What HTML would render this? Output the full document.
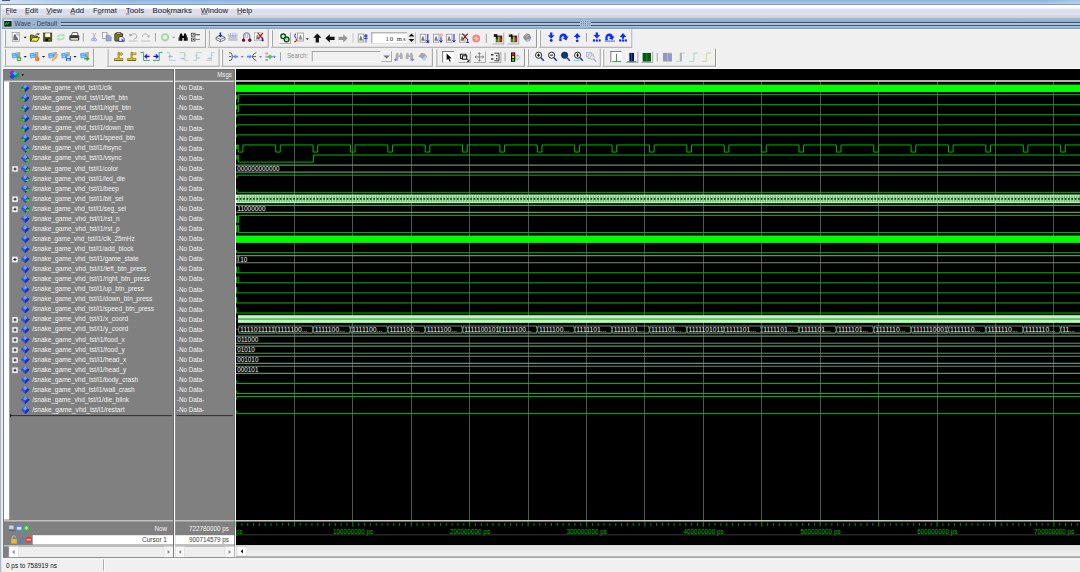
<!DOCTYPE html>
<html lang="en"><head><meta charset="utf-8"><title>Wave - Default</title>
<style>
html,body{margin:0;padding:0;background:#f0f0f0;overflow:hidden}
#app{position:relative;width:1080px;height:572px;overflow:hidden;background:#f0f0f0;font-family:"Liberation Sans",sans-serif}
#app>div{position:absolute}
svg{position:absolute;left:0;top:0;overflow:visible}
svg text{font-family:"Liberation Sans",sans-serif;white-space:pre}
#frame{left:0;top:0;width:1080px;height:5px;background:linear-gradient(90deg,rgba(214,230,246,.95) 0,rgba(214,230,246,.6) 40px,rgba(214,230,246,0) 130px,rgba(214,230,246,0) 1040px,rgba(214,230,246,.35) 1080px),linear-gradient(#8db1d9 0,#9bc0e6 45%,#a9cdf0 80%,#a4c4e4 100%)}
#framenub{left:2px;top:0;width:8px;height:1px;background:#3c3c44;opacity:.85}
#frameline{left:0;top:3.6px;width:1080px;height:1.3px;background:linear-gradient(#94a6bc,#7f8c9c)}
#frameleft{left:0;top:5px;width:2px;height:567px;background:linear-gradient(90deg,#9fadbf,#b4c0d0 45%,#dfe4ec 55%,#e6eaf0)}
#wtop{left:236px;top:68px;width:844px;height:1px;background:#fcfcfc}
#menubar{left:1px;top:5px;width:1079px;height:11px;background:linear-gradient(#ffffff 0,#fcfcfe 28%,#eceef8 35%,#dadeee 42%,#d9ddee 62%,#e0e4f3 100%)}
#menugap{left:1px;top:15.4px;width:1079px;height:2.6px;background:linear-gradient(#dcdde6 0,#d4d4d6 35%,#d8d8da 100%)}
#wtitle{left:2px;top:18px;width:1078px;height:11px;background:linear-gradient(#9ab5d3 0,#99b4d1 85%,#7f9bbb 100%)}
#tb1{left:2px;top:29px;width:1078px;height:19px;background:#f0f0f0}
#tb2{left:2px;top:48px;width:1078px;height:20px;background:#f0f0f0}
#names{left:3px;top:68px;width:171px;height:490px;background:#808080}
#values{left:174px;top:68px;width:62px;height:490px;background:#808080}
#waves{left:236px;top:69px;width:844px;height:477px;background:#000}
#wscroll{left:236px;top:545px;width:844px;height:13px;background:#f0f0f0}
#status{left:2px;top:558px;width:1078px;height:14px;background:#f0f0f0}
</style></head><body>
<div id="app">
<div id="frame"></div><div id="framenub"></div><div id="frameline"></div>

<div id="menubar"><svg width="1079" height="11" viewBox="1 5 1079 11">
<text x="5.7" y="12.9" font-size="7.9" fill="#1c1c1c" text-anchor="start" textLength="11.0" lengthAdjust="spacingAndGlyphs" >File</text>
<text x="24.9" y="12.9" font-size="7.9" fill="#1c1c1c" text-anchor="start" textLength="13.2" lengthAdjust="spacingAndGlyphs" >Edit</text>
<text x="46.3" y="12.9" font-size="7.9" fill="#1c1c1c" text-anchor="start" textLength="15.7" lengthAdjust="spacingAndGlyphs" >View</text>
<text x="70.2" y="12.9" font-size="7.9" fill="#1c1c1c" text-anchor="start" textLength="13.9" lengthAdjust="spacingAndGlyphs" >Add</text>
<text x="93.0" y="12.9" font-size="7.9" fill="#1c1c1c" text-anchor="start" textLength="23.9" lengthAdjust="spacingAndGlyphs" >Format</text>
<text x="125.7" y="12.9" font-size="7.9" fill="#1c1c1c" text-anchor="start" textLength="18.6" lengthAdjust="spacingAndGlyphs" >Tools</text>
<text x="152.6" y="12.9" font-size="7.9" fill="#1c1c1c" text-anchor="start" textLength="39.3" lengthAdjust="spacingAndGlyphs" >Bookmarks</text>
<text x="200.7" y="12.9" font-size="7.9" fill="#1c1c1c" text-anchor="start" textLength="27.4" lengthAdjust="spacingAndGlyphs" >Window</text>
<text x="236.9" y="12.9" font-size="7.9" fill="#1c1c1c" text-anchor="start" textLength="15.3" lengthAdjust="spacingAndGlyphs" >Help</text>
<rect x="5.9" y="13.7" width="3.4" height="0.6" fill="#3a3a3a"/>
<rect x="25.1" y="13.7" width="3.8" height="0.6" fill="#3a3a3a"/>
<rect x="46.6" y="13.7" width="4.4" height="0.6" fill="#3a3a3a"/>
<rect x="70.4" y="13.7" width="4.6" height="0.6" fill="#3a3a3a"/>
<rect x="97.6" y="13.7" width="4.0" height="0.6" fill="#3a3a3a"/>
<rect x="125.9" y="13.7" width="3.8" height="0.6" fill="#3a3a3a"/>
<rect x="167.6" y="13.7" width="3.4" height="0.6" fill="#3a3a3a"/>
<rect x="201" y="13.7" width="6.6" height="0.6" fill="#3a3a3a"/>
<rect x="237.1" y="13.7" width="4.6" height="0.6" fill="#3a3a3a"/>
</svg></div><div id="menugap"></div>
<div id="wtitle"><svg width="1078" height="11" viewBox="2 18 1078 11">
<rect x="3.8" y="19.3" width="8.4" height="8" fill="#d8d8d8"/><rect x="4.2" y="21" width="7.4" height="5.6" fill="#062a10"/>
<path d="M5 25 L6.5 22.5 L7.5 24.5 L9 22 " stroke="#20d060" stroke-width="0.9" fill="none"/>
<text x="14.5" y="26.4" font-size="7.6" fill="#2e4260" text-anchor="start" textLength="42.8" lengthAdjust="spacingAndGlyphs" >Wave - Default</text>
<rect x="61" y="21.9" width="1019" height="1.1" fill="#41566e"/><rect x="61" y="24.9" width="1019" height="1.1" fill="#41566e"/>
<rect x="61" y="23" width="1019" height="1.9" fill="#a8c6de"/><rect x="61" y="26" width="1019" height="1" fill="#a4c0da"/>
<rect x="580" y="20.3" width="11" height="6.2" fill="#a9c2de"/>
<rect x="581.0" y="21.0" width="0.9" height="0.9" fill="#5f7896"/>
<rect x="583.1" y="21.0" width="0.9" height="0.9" fill="#5f7896"/>
<rect x="585.2" y="21.0" width="0.9" height="0.9" fill="#5f7896"/>
<rect x="587.3" y="21.0" width="0.9" height="0.9" fill="#5f7896"/>
<rect x="589.4" y="21.0" width="0.9" height="0.9" fill="#5f7896"/>
<rect x="581.0" y="22.9" width="0.9" height="0.9" fill="#5f7896"/>
<rect x="583.1" y="22.9" width="0.9" height="0.9" fill="#5f7896"/>
<rect x="585.2" y="22.9" width="0.9" height="0.9" fill="#5f7896"/>
<rect x="587.3" y="22.9" width="0.9" height="0.9" fill="#5f7896"/>
<rect x="589.4" y="22.9" width="0.9" height="0.9" fill="#5f7896"/>
<rect x="581.0" y="24.8" width="0.9" height="0.9" fill="#5f7896"/>
<rect x="583.1" y="24.8" width="0.9" height="0.9" fill="#5f7896"/>
<rect x="585.2" y="24.8" width="0.9" height="0.9" fill="#5f7896"/>
<rect x="587.3" y="24.8" width="0.9" height="0.9" fill="#5f7896"/>
<rect x="589.4" y="24.8" width="0.9" height="0.9" fill="#5f7896"/>
</svg></div>
<div id="tb1"><svg width="1078" height="19" viewBox="2 29 1078 19"><rect x="4.10" y="30.20" width="0.90" height="16.10" fill="#ffffff" /><rect x="5.00" y="30.20" width="0.90" height="16.30" fill="#9c9c9c" /><rect x="4.10" y="46.80" width="202.10" height="1.00" fill="#969696" /><rect x="205.20" y="29.40" width="1.00" height="18.30" fill="#969696" /><rect x="206.20" y="29.40" width="0.70" height="18.90" fill="#fbfbfb" /><rect x="4.10" y="47.80" width="202.70" height="0.70" fill="#fbfbfb" /><rect x="207.90" y="30.20" width="0.90" height="16.10" fill="#ffffff" /><rect x="208.80" y="30.20" width="0.90" height="16.30" fill="#9c9c9c" /><rect x="207.90" y="46.80" width="60.90" height="1.00" fill="#969696" /><rect x="267.80" y="29.40" width="1.00" height="18.30" fill="#969696" /><rect x="268.80" y="29.40" width="0.70" height="18.90" fill="#fbfbfb" /><rect x="207.90" y="47.80" width="61.50" height="0.70" fill="#fbfbfb" /><rect x="271.10" y="30.20" width="0.90" height="16.10" fill="#ffffff" /><rect x="272.00" y="30.20" width="0.90" height="16.30" fill="#9c9c9c" /><rect x="271.10" y="46.80" width="265.90" height="1.00" fill="#969696" /><rect x="536.00" y="29.40" width="1.00" height="18.30" fill="#969696" /><rect x="537.00" y="29.40" width="0.70" height="18.90" fill="#fbfbfb" /><rect x="271.10" y="47.80" width="266.50" height="0.70" fill="#fbfbfb" /><rect x="539.10" y="30.20" width="0.90" height="16.10" fill="#ffffff" /><rect x="540.00" y="30.20" width="0.90" height="16.30" fill="#9c9c9c" /><rect x="539.10" y="46.80" width="93.40" height="1.00" fill="#969696" /><rect x="631.50" y="29.40" width="1.00" height="18.30" fill="#969696" /><rect x="632.50" y="29.40" width="0.70" height="18.90" fill="#fbfbfb" /><rect x="539.10" y="47.80" width="94.00" height="0.70" fill="#fbfbfb" /><rect x="12.20" y="32.60" width="7.40" height="8.80" fill="#fafafa" stroke="#9a9a9a" stroke-width="0.7"/><path d="M13.2 40.2 L13.6 36 L14.6 34.2 L16 34.4 L16.4 36.8 L17.4 37.4 L18.4 40.2Z" fill="#6a6a6a" /><path d="M17 32.4 L19.8 35.2 L17 35.2Z" fill="#d8d8d8" stroke="#9a9a9a" stroke-width="0.5" /><path d="M23.50 36.80H26.70L25.10 38.60Z" fill="#222" /><path d="M30.4 41.2 V35 H33 L34 36 H37.4 V37.6" fill="#8a8a10" stroke="#3a3a00" stroke-width="0.8" /><path d="M30.6 41.2 L32.6 37.4 H39.4 L37.4 41.2Z" fill="#f0ea48" stroke="#3a3a00" stroke-width="0.8" /><path d="M35.6 34.6 Q37.4 32.8 38.8 34.4 M38.9 34.5 l-1.5 0.1 M38.9 34.5 l0.1 -1.5" fill="none" stroke="#222" stroke-width="0.7" /><rect x="43.60" y="33.00" width="8.20" height="8.20" fill="#5e5e08" stroke="#2a2a00" stroke-width="0.6"/><rect x="45.20" y="33.30" width="5.00" height="3.60" fill="#fbfbfb" /><rect x="45.40" y="38.60" width="4.40" height="2.60" fill="#050505" /><rect x="48.60" y="39.00" width="0.90" height="1.80" fill="#d0d0d0" /><path d="M56.6 36.6 Q58.4 33.4 62.4 34.4 L62.8 33.2 L65.4 35.6 L62 37 L62.2 35.8 Q59.4 35 58.2 37.4Z" fill="#b2dcb6" /><path d="M65.2 37.8 Q63.4 41 59.4 40 L59 41.2 L56.4 38.8 L59.8 37.4 L59.6 38.6 Q62.4 39.4 63.6 37Z" fill="#b2dcb6" /><path d="M71.4 35.6 L72.4 32.6 H77.6 L78 35.6Z" fill="#f4f4f4" stroke="#333" stroke-width="0.7" /><path d="M69.4 36 Q69.4 35.2 70.4 35.2 H78 Q79.2 35.2 79.2 36.2 V39.4 Q79.2 40.6 78 40.6 H70.6 Q69.4 40.6 69.4 39.6Z" fill="#3a3a3a" /><rect x="70.60" y="38.20" width="7.40" height="1.50" fill="#f4f4f4" /><rect x="74.60" y="38.40" width="2.20" height="1.00" fill="#e8d820" /><rect x="82.85" y="33.00" width="0.90" height="8.60" fill="#9a9a9a" /><path d="M92.6 32.8 L94.8 37.8 M95.8 32.8 L93.4 37.8" fill="none" stroke="#a4a4b0" stroke-width="0.8" /><circle cx="92.60" cy="39.60" r="1.15" fill="none" stroke="#7878ff" stroke-width="0.75"/><circle cx="95.40" cy="39.80" r="1.15" fill="none" stroke="#7878ff" stroke-width="0.75"/><path d="M93.4 37.6 L93 38.6 M94.8 37.6 L95.2 38.8" fill="none" stroke="#7878ff" stroke-width="0.8" /><rect x="102.40" y="32.60" width="4.60" height="6.00" fill="#f6f6f6" stroke="#909090" stroke-width="0.7"/><path d="M106 35 H109.4 L111.2 36.8 V41 H106Z" fill="#9aa0d8" stroke="#8a8ab8" stroke-width="0.6" /><path d="M109.4 35 V36.8 H111.2" fill="#e8e8f4" stroke="#8a8ab8" stroke-width="0.4" /><rect x="114.80" y="33.40" width="7.80" height="7.60" fill="#7a7a10" stroke="#2c2c00" stroke-width="0.8" rx="0.6"/><rect x="116.80" y="32.40" width="3.80" height="1.80" fill="#c8c8c8" stroke="#2c2c00" stroke-width="0.6"/><path d="M118.8 36.6 H122.2 L124.2 38.6 V41.4 H118.8Z" fill="#f4f4fa" stroke="#20209a" stroke-width="0.8" /><path d="M121.6 38.4 L124 40.8 H121.6Z" fill="#20209a" /><path d="M130.2 35.2 Q135 32 136.8 35.6 Q137.4 38.2 133.6 39.4" fill="none" stroke="#a6a6a6" stroke-width="0.9" /><path d="M129.2 33.6 L129.6 36.6 L132.4 35.8Z" fill="#a6a6a6" /><rect x="128.60" y="40.60" width="9.20" height="0.80" fill="#b4b4b4" /><path d="M148.8 36.8 Q147.6 32.8 144 34.2 Q142.4 35.2 142.4 37" fill="none" stroke="#b0b0b0" stroke-width="0.9" /><path d="M149.8 34.8 L149.2 37.8 L146.6 36.8Z" fill="#b0b0b0" /><rect x="140.80" y="40.60" width="9.20" height="0.80" fill="#b4b4b4" /><rect x="154.95" y="33.00" width="0.90" height="8.60" fill="#9a9a9a" /><circle cx="165.10" cy="37.30" r="3.30" fill="#d4ecd4" stroke="#a6d4aa" stroke-width="1.7"/><circle cx="165.10" cy="37.30" r="1.10" fill="#f2faf2"/><path d="M172.10 36.80H175.30L173.70 38.60Z" fill="#9a9a9a" /><path d="M179.4 40.8 V36 L180.4 33.4 H182 L182.6 36 H183.6 L184.2 33.4 H185.8 L186.8 36 V40.8 H183.8 V38 H182.4 V40.8Z" fill="#0a0a0a" /><rect x="178.60" y="37.40" width="0.90" height="3.40" fill="#0a0a0a" /><rect x="186.80" y="37.40" width="0.90" height="3.40" fill="#0a0a0a" /><rect x="191.60" y="33.20" width="3.40" height="3.00" fill="#f0f0f0" stroke="#333" stroke-width="0.7"/><rect x="191.60" y="38.00" width="3.40" height="3.00" fill="#f0f0f0" stroke="#333" stroke-width="0.7"/><rect x="195.40" y="34.30" width="4.60" height="0.90" fill="#333" /><rect x="195.40" y="39.10" width="4.60" height="0.90" fill="#777" /><rect x="192.60" y="34.30" width="1.60" height="0.90" fill="#333" /><rect x="192.60" y="39.10" width="1.60" height="0.90" fill="#333" /><path d="M216 37.4 L220.4 35.4 L225 37.4 V39.6 L220.4 41.8 L216 39.6Z" fill="#f2f2f2" stroke="#444" stroke-width="0.7" /><path d="M216 37.4 L220.4 39.4 L225 37.4 M220.4 39.4 V41.8" fill="none" stroke="#444" stroke-width="0.6" /><path d="M219.6 32.4 H221.2 V35 H222.6 L220.4 37.4 L218.2 35 H219.6Z" fill="#1030c8" /><rect x="228.20" y="36.40" width="9.20" height="4.60" fill="#c6c6c6" /><rect x="228.20" y="33.60" width="0.80" height="3.00" fill="#b8b8c8" /><rect x="236.60" y="33.60" width="0.80" height="3.00" fill="#b8b8c8" /><path d="M230.4 32.8 V36.4 M229.4 35.2 L230.4 36.6 L231.4 35.2" fill="none" stroke="#8a8ae8" stroke-width="0.7" /><path d="M232.8 32.8 V36.4 M231.8 35.2 L232.8 36.6 L233.8 35.2" fill="none" stroke="#8a8ae8" stroke-width="0.7" /><path d="M235.2 32.8 V36.4 M234.2 35.2 L235.2 36.6 L236.2 35.2" fill="none" stroke="#8a8ae8" stroke-width="0.7" /><path d="M243.6 39.6 V36.2 Q243.8 32.8 246.6 32.8 Q249.6 32.8 249.8 36.2 V39.6" fill="none" stroke="#8c8c98" stroke-width="1.3" /><path d="M245.6 33.6 L244.8 38 M248 33.4 L247.4 38" fill="none" stroke="#b4b4d0" stroke-width="1.2" /><circle cx="243.60" cy="40.20" r="1.40" fill="#a00024" stroke="#500010" stroke-width="0.5"/><circle cx="249.80" cy="40.20" r="1.40" fill="#a00024" stroke="#500010" stroke-width="0.5"/><rect x="254.60" y="32.80" width="6.40" height="8.00" fill="#f4f4f4" stroke="#9a9a9a" stroke-width="0.6"/><path d="M255.8 39.6 L256.8 35 L258.2 35 L258.8 37.6 L259.8 39.6Z" fill="#8a8a8a" /><path d="M257.8 32.8 L263.2 39.4 M263 32.8 L258.2 38.8" fill="none" stroke="#b01818" stroke-width="1.1" /><path d="M262.6 37.4 V41.4 M261.2 40.2 H264" fill="none" stroke="#1818c0" stroke-width="0.9" /><rect x="279.00" y="32.00" width="11.40" height="11.60" fill="#f0f0f0" /><rect x="279.00" y="43.00" width="11.80" height="0.80" fill="#a0a0a0" /><rect x="290.20" y="32.00" width="0.80" height="11.80" fill="#a0a0a0" /><rect x="279.00" y="32.00" width="11.40" height="0.60" fill="#fdfdfd" /><rect x="279.00" y="32.00" width="0.60" height="11.40" fill="#fdfdfd" /><circle cx="283.20" cy="36.20" r="2.30" fill="none" stroke="#0d5a20" stroke-width="1.5"/><circle cx="286.60" cy="39.40" r="2.30" fill="none" stroke="#0d5a20" stroke-width="1.5"/><circle cx="286.60" cy="39.40" r="0.90" fill="#9ccca0"/><rect x="297.60" y="33.00" width="5.80" height="8.00" fill="#f6f6f6" stroke="#8a8a8a" stroke-width="0.7"/><path d="M298.8 39.6 L299.8 35.2 L301 35.2 L301.6 37.6 L302.6 39.6Z" fill="#8a8a8a" /><path d="M296.2 38.2 Q293.6 36.2 295.8 33.6" fill="none" stroke="#2a3cff" stroke-width="1.1" /><path d="M296.4 38.8 Q296.6 41.8 294.2 41.8" fill="none" stroke="#d01818" stroke-width="1.1" /><path d="M305.70 38.20H308.90L307.30 40.00Z" fill="#222" /><path d="M317.3 33.6 L321.4 37.8 H318.9 V42.6 H315.7 V37.8 H313.2Z" fill="#111" /><path d="M325.4 38.3 L329.8 34.2 V36.7 H334.6 V39.9 H329.8 V42.4Z" fill="#111" /><path d="M347.7 38.3 L343.3 34.2 V36.7 H338.5 V39.9 H343.3 V42.4Z" fill="#969696" /><rect x="352.55" y="33.40" width="0.90" height="9.20" fill="#c0c0c0" /><rect x="358.20" y="34.00" width="5.60" height="8.00" fill="#f6f6f6" stroke="#8a8a8a" stroke-width="0.7"/><path d="M359.2 40.6 L360.2 36.2 L361.4 36.2 L362 38.6 L363 40.6Z" fill="#7a7a7a" /><rect x="365.00" y="34.00" width="1.80" height="8.60" fill="#9a9ad8" /><rect x="364.20" y="34.80" width="3.40" height="0.80" fill="#1a1ac0" /><rect x="364.20" y="36.40" width="3.40" height="0.80" fill="#1a1ac0" /><rect x="364.20" y="38.00" width="3.40" height="0.80" fill="#1a1ac0" /><rect x="371.60" y="32.60" width="35.20" height="10.60" fill="#ffffff" /><rect x="371.40" y="32.40" width="35.60" height="0.90" fill="#8e8e8e" /><rect x="371.40" y="32.40" width="0.90" height="10.80" fill="#8e8e8e" /><rect x="371.60" y="43.00" width="44.00" height="0.70" fill="#dcdcdc" /><text x="385.4" y="41.1" font-size="6.9" fill="#2c2c2c" textLength="20.4" lengthAdjust="spacing" style="font-family:'Liberation Serif',serif">10 ms</text><rect x="407.40" y="32.60" width="8.00" height="10.40" fill="#ececec" /><path d="M411.5 33.6 L414.4 36.6 H408.6Z" fill="#111" /><path d="M411.5 42.0 L414.4 39.0 H408.6Z" fill="#111" /><rect x="415.20" y="32.60" width="0.70" height="10.60" fill="#a8a8a8" /><rect x="420.20" y="34.20" width="5.60" height="8.00" fill="#f6f6f6" stroke="#8a8a8a" stroke-width="0.7"/><path d="M421.2 40.8 L422.2 36.4 L423.4 36.4 L424.0 38.8 L425.0 40.8Z" fill="#7a7a7a" /><path d="M427.8 34 V42.4 M426.40000000000003 40.2 L427.8 42 L429.2 40.2" fill="none" stroke="#1c1cc8" stroke-width="1.0" /><rect x="426.20" y="42.00" width="3.20" height="0.80" fill="#1c1cc8" /><rect x="433.40" y="34.20" width="5.60" height="8.00" fill="#f6f6f6" stroke="#8a8a8a" stroke-width="0.7"/><path d="M434.4 40.8 L435.4 36.4 L436.59999999999997 36.4 L437.2 38.8 L438.2 40.8Z" fill="#7a7a7a" /><circle cx="441.20" cy="35.20" r="1.30" fill="#ffd0d8" stroke="#e86a80" stroke-width="0.6"/><path d="M441.0 37.2 V42.4 M439.6 40.4 L441.0 42.2 L442.4 40.4" fill="none" stroke="#1c1cc8" stroke-width="1.0" /><rect x="446.40" y="34.20" width="5.60" height="8.00" fill="#f6f6f6" stroke="#8a8a8a" stroke-width="0.7"/><path d="M447.4 40.8 L448.4 36.4 L449.59999999999997 36.4 L450.2 38.8 L451.2 40.8Z" fill="#7a7a7a" /><path d="M454.0 34 V42.4 M452.6 40.2 L454.0 42 L455.4 40.2" fill="none" stroke="#1c1cc8" stroke-width="1.0" /><rect x="459.40" y="34.20" width="5.60" height="8.00" fill="#f6f6f6" stroke="#8a8a8a" stroke-width="0.7"/><path d="M460.4 40.8 L461.4 36.4 L462.59999999999997 36.4 L463.2 38.8 L464.2 40.8Z" fill="#7a7a7a" /><path d="M462.4 33.6 L468.0 40 M467.79999999999995 33.6 L462.79999999999995 39.4" fill="none" stroke="#8a1010" stroke-width="1.1" /><path d="M467.6 39 V42.6 M466.2 42.4 H469.0" fill="none" stroke="#1c1cc8" stroke-width="0.9" /><circle cx="476.20" cy="38.50" r="3.90" fill="#f0887a"/><path d="M473.8 38.5 H478.6 M476.2 36.1 V40.9 M474.6 36.9 L477.8 40.1" fill="none" stroke="#fbd0c8" stroke-width="0.9" /><rect x="485.85" y="33.90" width="0.90" height="9.10" fill="#9a9a9a" /><rect x="492.20" y="32.40" width="11.40" height="11.60" fill="#f0f0f0" /><rect x="492.20" y="43.60" width="11.80" height="0.80" fill="#a0a0a0" /><rect x="503.40" y="32.40" width="0.80" height="12.00" fill="#a0a0a0" /><rect x="492.20" y="32.40" width="11.40" height="0.60" fill="#fdfdfd" /><rect x="492.20" y="32.40" width="0.60" height="11.40" fill="#fdfdfd" /><rect x="495.80" y="35.60" width="6.40" height="6.60" fill="#2a2a2a" /><rect x="496.40" y="39.20" width="1.30" height="2.60" fill="#28c828" /><rect x="498.20" y="36.60" width="1.30" height="5.20" fill="#e8e020" /><rect x="500.00" y="37.60" width="1.50" height="4.20" fill="#e02020" /><rect x="493.80" y="34.20" width="3.60" height="2.60" fill="#0a0a0a" /><rect x="507.20" y="32.40" width="11.40" height="11.60" fill="#f0f0f0" /><rect x="507.20" y="43.60" width="11.80" height="0.80" fill="#a0a0a0" /><rect x="518.40" y="32.40" width="0.80" height="12.00" fill="#a0a0a0" /><rect x="507.20" y="32.40" width="11.40" height="0.60" fill="#fdfdfd" /><rect x="507.20" y="32.40" width="0.60" height="11.40" fill="#fdfdfd" /><rect x="510.80" y="35.60" width="6.40" height="6.60" fill="#2a2a2a" /><rect x="511.40" y="39.20" width="1.30" height="2.60" fill="#28c828" /><rect x="513.20" y="36.60" width="1.30" height="5.20" fill="#e8e020" /><rect x="515.00" y="37.60" width="1.50" height="4.20" fill="#e02020" /><rect x="508.80" y="34.20" width="3.60" height="2.60" fill="#0a0a0a" /><rect x="509.40" y="33.80" width="1.00" height="1.60" fill="#e8e8e8" /><path d="M523 37 L526 33.4 L529.4 34 L531.2 37.6 L529.8 40.8 L526.6 41.8 L524.4 39.6Z" fill="#8e8e8e" /><path d="M525.6 40.6 Q527.4 38 529.8 39.4 L528 42Z" fill="#a8c8f8" /><path d="M524.4 36.4 L526.6 34.2 M526.4 37.4 L528.6 35" fill="none" stroke="#d8d8d8" stroke-width="0.7" /><path d="M550.0 32.6 H552.4000000000001 V35.2 H554.6 L551.2 38.800000000000004 L547.8000000000001 35.2 H550.0Z" fill="#1030f0" /><circle cx="551.20" cy="40.50" r="1.45" fill="#1030f0"/><path d="M559.2 38.6 Q559.6 33.2 564.2 33.6 Q566.6 34.2 567.0 36.6 L568.4000000000001 36.2 L566.4000000000001 40.4 L562.6 38.2 L564.4000000000001 37.6 Q564.0 36.2 562.6 36.2 Q561.2 36.6 561.4000000000001 38.8Z" fill="#1030f0" /><circle cx="560.40" cy="39.90" r="1.30" fill="#1030f0"/><path d="M576.0 38.6 H578.4000000000001 V37.0 H580.6 L577.2 33.0 L573.8000000000001 37.0 H576.0Z" fill="#1030f0" /><circle cx="577.20" cy="40.80" r="1.40" fill="#1030f0"/><rect x="585.95" y="33.00" width="0.90" height="8.80" fill="#9a9a9a" /><path d="M595.5999999999999 32.4 H598.0 V35.0 H600.1999999999999 L596.8 38.6 L593.4 35.0 H595.5999999999999Z" fill="#1030f0" /><rect x="592.90" y="39.40" width="2.10" height="2.20" fill="#1030f0" /><circle cx="596.80" cy="40.50" r="1.20" fill="#1030f0"/><rect x="598.60" y="39.40" width="2.10" height="2.20" fill="#1030f0" /><path d="M605.2 38.4 Q605.6 33.2 610.2 33.6 Q612.6 34.2 613 36.6 L614.4 36.2 L612.4 40 L608.6 38.2 L610.4 37.6 Q610 36.2 608.6 36.2 Q607.2 36.6 607.4 38.6Z" fill="#1030f0" /><circle cx="606.60" cy="39.20" r="1.20" fill="#1030f0"/><rect x="604.80" y="40.60" width="10.20" height="1.00" fill="#4868f8" /><path d="M621.8 38.8 H624.2 V36.99999999999999 H626.4 L623 32.99999999999999 L619.6 36.99999999999999 H621.8Z" fill="#1030f0" /><rect x="619.10" y="39.40" width="2.10" height="2.20" fill="#1030f0" /><circle cx="623.00" cy="40.50" r="1.20" fill="#1030f0"/><rect x="624.80" y="39.40" width="2.10" height="2.20" fill="#1030f0" /></svg></div>
<div id="tb2"><svg width="1078" height="20" viewBox="2 48 1078 20"><rect x="4.10" y="49.40" width="0.90" height="15.90" fill="#ffffff" /><rect x="5.00" y="49.40" width="0.90" height="16.10" fill="#9c9c9c" /><rect x="4.10" y="65.80" width="90.10" height="1.00" fill="#969696" /><rect x="93.20" y="48.60" width="1.00" height="18.10" fill="#969696" /><rect x="94.20" y="48.60" width="0.70" height="18.70" fill="#fbfbfb" /><rect x="4.10" y="66.80" width="90.70" height="0.70" fill="#fbfbfb" /><rect x="106.70" y="49.40" width="0.90" height="15.90" fill="#ffffff" /><rect x="107.60" y="49.40" width="0.90" height="16.10" fill="#9c9c9c" /><rect x="106.70" y="65.80" width="113.00" height="1.00" fill="#969696" /><rect x="218.70" y="48.60" width="1.00" height="18.10" fill="#969696" /><rect x="219.70" y="48.60" width="0.70" height="18.70" fill="#fbfbfb" /><rect x="106.70" y="66.80" width="113.60" height="0.70" fill="#fbfbfb" /><rect x="221.30" y="49.40" width="0.90" height="15.90" fill="#ffffff" /><rect x="222.20" y="49.40" width="0.90" height="16.10" fill="#9c9c9c" /><rect x="221.30" y="65.80" width="211.60" height="1.00" fill="#969696" /><rect x="431.90" y="48.60" width="1.00" height="18.10" fill="#969696" /><rect x="432.90" y="48.60" width="0.70" height="18.70" fill="#fbfbfb" /><rect x="221.30" y="66.80" width="212.20" height="0.70" fill="#fbfbfb" /><rect x="435.50" y="49.40" width="0.90" height="15.90" fill="#ffffff" /><rect x="436.40" y="49.40" width="0.90" height="16.10" fill="#9c9c9c" /><rect x="435.50" y="65.80" width="89.50" height="1.00" fill="#969696" /><rect x="524.00" y="48.60" width="1.00" height="18.10" fill="#969696" /><rect x="525.00" y="48.60" width="0.70" height="18.70" fill="#fbfbfb" /><rect x="435.50" y="66.80" width="90.10" height="0.70" fill="#fbfbfb" /><rect x="527.10" y="49.40" width="0.90" height="15.90" fill="#ffffff" /><rect x="528.00" y="49.40" width="0.90" height="16.10" fill="#9c9c9c" /><rect x="527.10" y="65.80" width="73.70" height="1.00" fill="#969696" /><rect x="599.80" y="48.60" width="1.00" height="18.10" fill="#969696" /><rect x="600.80" y="48.60" width="0.70" height="18.70" fill="#fbfbfb" /><rect x="527.10" y="66.80" width="74.30" height="0.70" fill="#fbfbfb" /><rect x="602.40" y="49.40" width="0.90" height="15.90" fill="#ffffff" /><rect x="603.30" y="49.40" width="0.90" height="16.10" fill="#9c9c9c" /><rect x="602.40" y="65.80" width="113.60" height="1.00" fill="#969696" /><rect x="715.00" y="48.60" width="1.00" height="18.10" fill="#969696" /><rect x="716.00" y="48.60" width="0.70" height="18.70" fill="#fbfbfb" /><rect x="602.40" y="66.80" width="114.20" height="0.70" fill="#fbfbfb" /><path d="M11.600000000000001 53.6 L18.200000000000003 52.2 L18.6 57.2 L12.4 58.6Z" fill="#4aa6f6" /><path d="M13.0 55 L15.0 54.5 M13.3 56.8 L16.200000000000003 56.1 M15.8 53.8 L17.4 53.5" fill="none" stroke="#c4e2ff" stroke-width="0.8" /><path d="M18.3 52.2 L20.3 51.9 L20.1 58.4 L18.4 58.4Z" fill="#c48a4a" /><path d="M19.200000000000003 52.2 L19.200000000000003 58.2" fill="none" stroke="#e8c090" stroke-width="0.5" /><rect x="16.80" y="56.80" width="4.40" height="4.40" fill="#4cae4c" rx="1.2"/><rect x="18.10" y="58.10" width="1.80" height="1.80" fill="#cfeecf" rx="0.5"/><path d="M23.60 55.90H26.80L25.20 57.70Z" fill="#222" /><path d="M29.6 53.6 L36.2 52.2 L36.6 57.2 L30.400000000000002 58.6Z" fill="#4aa6f6" /><path d="M31.0 55 L33.0 54.5 M31.3 56.8 L34.2 56.1 M33.8 53.8 L35.4 53.5" fill="none" stroke="#c4e2ff" stroke-width="0.8" /><path d="M36.3 52.2 L38.3 51.9 L38.1 58.4 L36.4 58.4Z" fill="#c48a4a" /><path d="M37.2 52.2 L37.2 58.2" fill="none" stroke="#e8c090" stroke-width="0.5" /><circle cx="37.20" cy="58.90" r="2.30" fill="#f07a22"/><circle cx="36.60" cy="58.30" r="0.80" fill="#ffb070"/><path d="M41.90 55.90H45.10L43.50 57.70Z" fill="#222" /><path d="M48.0 53.6 L54.6 52.2 L55.0 57.2 L48.800000000000004 58.6Z" fill="#4aa6f6" /><path d="M49.400000000000006 55 L51.400000000000006 54.5 M49.7 56.8 L52.6 56.1 M52.2 53.8 L53.800000000000004 53.5" fill="none" stroke="#c4e2ff" stroke-width="0.8" /><path d="M54.7 52.2 L56.7 51.9 L56.5 58.4 L54.800000000000004 58.4Z" fill="#c48a4a" /><path d="M55.6 52.2 L55.6 58.2" fill="none" stroke="#e8c090" stroke-width="0.5" /><path d="M56.6 53.4 L58.400000000000006 54.8 L53.800000000000004 60.6 L51.400000000000006 61.2 L52.0 59.0Z" fill="#eaa844" /><path d="M56.400000000000006 54.8 L53.0 59.2" fill="none" stroke="#f8dca0" stroke-width="0.8" /><path d="M61.0 53.6 L67.60000000000001 52.2 L68.0 57.2 L61.800000000000004 58.6Z" fill="#4aa6f6" /><path d="M62.400000000000006 55 L64.4 54.5 M62.7 56.8 L65.60000000000001 56.1 M65.2 53.8 L66.8 53.5" fill="none" stroke="#c4e2ff" stroke-width="0.8" /><path d="M67.7 52.2 L69.7 51.9 L69.5 58.4 L67.8 58.4Z" fill="#c48a4a" /><path d="M68.60000000000001 52.2 L68.60000000000001 58.2" fill="none" stroke="#e8c090" stroke-width="0.5" /><rect x="65.80" y="56.00" width="5.20" height="4.80" fill="#3068e0" /><rect x="66.80" y="56.20" width="3.20" height="1.80" fill="#d8e8ff" /><rect x="67.00" y="59.00" width="2.80" height="1.60" fill="#a8d8a8" /><path d="M73.40 55.90H76.60L75.00 57.70Z" fill="#222" /><path d="M80.0 53.6 L86.60000000000001 52.2 L87.0 57.2 L80.8 58.6Z" fill="#4aa6f6" /><path d="M81.4 55 L83.4 54.5 M81.7 56.8 L84.60000000000001 56.1 M84.2 53.8 L85.8 53.5" fill="none" stroke="#c4e2ff" stroke-width="0.8" /><path d="M86.7 52.2 L88.7 51.9 L88.5 58.4 L86.8 58.4Z" fill="#c48a4a" /><path d="M87.60000000000001 52.2 L87.60000000000001 58.2" fill="none" stroke="#e8c090" stroke-width="0.5" /><path d="M84.2 58 H86.60000000000001 V56.2 L89.8 58.8 L86.60000000000001 61.2 V59.6 H84.2Z" fill="#38a838" /><path d="M118.0 52.3 H119.30000000000001 V58.5 H123.0 V60.3 H114.4 V58.5 H118.0Z" fill="#f4d418" stroke="#6a5800" stroke-width="0.55" /><rect x="114.50" y="60.10" width="8.40" height="0.60" fill="#3a3000" /><path d="M119.30000000000001 53.3 H121.0 V52.3 L123.10000000000001 54 L121.0 55.7 V54.7 H119.30000000000001Z" fill="#f4d418" stroke="#6a5800" stroke-width="0.45" /><path d="M131.0 52.3 H132.3 V58.5 H136.0 V60.3 H127.4 V58.5 H131.0Z" fill="#f4d418" stroke="#6a5800" stroke-width="0.55" /><rect x="127.50" y="60.10" width="8.40" height="0.60" fill="#3a3000" /><path d="M132.3 52.9 H136.1 V54.7 H132.3Z" fill="#f4d418" stroke="#6a5800" stroke-width="0.45" /><path d="M140.4 52.4 H143.6 V60.4 H149.8" fill="none" stroke="#3aa870" stroke-width="1.0" /><path d="M149.6 56.4 H145.6 M147.2 54.4 L145 56.4 L147.2 58.4" fill="none" stroke="#2408e0" stroke-width="1.2" /><path d="M153 60.4 H159.2 V52.4 H162.6" fill="none" stroke="#3aa870" stroke-width="1.0" /><path d="M153.4 56.4 H157.4 M155.8 54.4 L158 56.4 L155.8 58.4" fill="none" stroke="#2408e0" stroke-width="1.2" /><path d="M166.6 52.6 H169.6 V60.4 H175.8" fill="none" stroke="#a8d8b8" stroke-width="0.9" /><path d="M168 56.4 H173 M170.6 55.2 V57.8" fill="none" stroke="#b0a0f0" stroke-width="0.8" /><path d="M179.4 52.6 H184.6 V60.4 H188.4" fill="none" stroke="#a8d8b8" stroke-width="0.9" /><path d="M180.4 58.6 H183.8 M182.6 57.4 L183.9 58.6 L182.6 59.8 M184.6 55 H185.8" fill="none" stroke="#b0a0f0" stroke-width="0.8" /><path d="M193.2 60.4 H196.6 V52.6 H201.4" fill="none" stroke="#a8d8b8" stroke-width="0.9" /><path d="M196.6 58 H199.6 M195.6 55.4 H197.4" fill="none" stroke="#b0a0f0" stroke-width="0.8" /><path d="M206.2 60.4 H211.4 V52.6 H214.4" fill="none" stroke="#a8d8b8" stroke-width="0.9" /><path d="M207.4 58.4 H210.6 M209.6 57.2 L210.8 58.4 L209.6 59.6 M211.4 55.4 H212.6" fill="none" stroke="#b0a0f0" stroke-width="0.8" /><path d="M229 52.6 Q232.4 52.6 232 54.8 Q231.8 56.4 233.4 56.6 Q231.8 56.8 232 58.4 Q232.4 60.6 229 60.6 M229 56.6 H231.4" fill="none" stroke="#3a3a3a" stroke-width="0.8" /><path d="M238 55.8 H235.6 V54.4 L233.2 56.6 L235.6 58.8 V57.4 H238Z" fill="#4a90ff" /><path d="M240.60 56.10H243.80L242.20 57.90Z" fill="#8a8a8a" /><path d="M247 55.8 H249.4 V54.4 L251.8 56.6 L249.4 58.8 V57.4 H247Z" fill="#4a90ff" /><path d="M256.4 52.4 Q253.2 53.6 252.2 56.6 Q253.2 59.6 256.4 60.8 M252.4 56.6 H256" fill="none" stroke="#3a3a3a" stroke-width="0.8" /><path d="M259.00 56.10H262.20L260.60 57.90Z" fill="#8a8a8a" /><rect x="265.40" y="52.60" width="2.60" height="1.80" fill="#a8a8a8" /><rect x="265.40" y="55.80" width="2.60" height="1.80" fill="#a8a8a8" /><rect x="265.40" y="59.00" width="2.60" height="1.80" fill="#a8a8a8" /><path d="M267.2 56.8 L270 54.4 L272.8 56.8 L270 59.2Z" fill="#58c068" /><path d="M272.4 56.8 H275 M274 55.6 L275.2 56.8 L274 58" fill="none" stroke="#3858ff" stroke-width="0.8" /><rect x="280.05" y="52.40" width="0.90" height="8.40" fill="#9a9a9a" /><text x="286.9" y="58.1" font-size="6.9" fill="#8c8c8c" textLength="21.2" lengthAdjust="spacingAndGlyphs">Search:</text><rect x="312.00" y="51.20" width="68.20" height="10.20" fill="#f1f1f1" /><rect x="311.80" y="51.00" width="68.40" height="0.90" fill="#9a9a9a" /><rect x="311.80" y="51.00" width="0.90" height="10.60" fill="#9a9a9a" /><rect x="312.60" y="61.20" width="79.00" height="0.80" fill="#fcfcfc" /><rect x="381.60" y="51.00" width="9.80" height="10.40" fill="#f0f0f0" /><rect x="381.40" y="61.00" width="10.40" height="0.80" fill="#9c9c9c" /><rect x="391.00" y="51.00" width="0.80" height="10.80" fill="#9c9c9c" /><rect x="381.40" y="51.00" width="9.80" height="0.60" fill="#fdfdfd" /><rect x="381.40" y="51.00" width="0.60" height="10.20" fill="#fdfdfd" /><path d="M383.4 55.4 H389.8 L386.6 58.6Z" fill="#6c6c6c" /><path d="M395.59999999999997 59 V55.4 L396.59999999999997 52.8 H398.2 L398.8 55.4 H399.59999999999997 L400.2 52.8 H401.8 L402.8 55.4 V59 H400.0 V57 H398.4 V59Z" fill="#b0b0b0" /><path d="M397.8 59.2 H396.0 V58 L394.0 59.8 L396.0 61.6 V60.4 H397.8Z" fill="#7070ff" /><path d="M405.79999999999995 59 V55.4 L406.79999999999995 52.8 H408.4 L409.0 55.4 H409.79999999999995 L410.4 52.8 H412.0 L413.0 55.4 V59 H410.2 V57 H408.59999999999997 V59Z" fill="#b0b0b0" /><path d="M410.4 59.2 H412.2 V58 L414.2 59.8 L412.2 61.6 V60.4 H410.4Z" fill="#7070ff" /><path d="M418.2 56.4 L421.6 52.8 L424.8 53.6 L427.2 56.8 L423.6 60.6 L421.6 58Z" fill="#a8a8a8" /><path d="M422.4 59 L425.2 56 L427.4 57.4 L424.2 61Z" fill="#b8d0f8" /><rect x="442.20" y="51.20" width="11.80" height="11.40" fill="#fdfdfd" /><rect x="442.20" y="51.00" width="11.80" height="0.90" fill="#6e6e6e" /><rect x="442.20" y="51.00" width="0.90" height="11.60" fill="#6e6e6e" /><rect x="442.20" y="62.20" width="12.20" height="0.60" fill="#e0e0e0" /><path d="M446.6 53.4 L446.6 60.2 L448.2 58.8 L449.6 61.8 L450.8 61.2 L449.4 58.4 L451.8 58.2Z" fill="#0a0a0a" /><rect x="458.40" y="51.20" width="11.80" height="11.20" fill="#efefef" /><rect x="458.40" y="62.00" width="12.20" height="0.90" fill="#a4a4a4" /><rect x="469.80" y="51.20" width="0.90" height="11.60" fill="#a4a4a4" /><rect x="458.40" y="51.00" width="11.80" height="0.60" fill="#fdfdfd" /><rect x="458.40" y="51.00" width="0.60" height="11.20" fill="#fdfdfd" /><rect x="460.40" y="54.20" width="5.60" height="4.20" fill="none" stroke="#111" stroke-width="0.9"/><rect x="462.40" y="55.80" width="4.40" height="3.40" fill="#f0f0f0" stroke="#111" stroke-width="1.0"/><path d="M466.6 59 L469 61.4 M469 59.4 V61.4 H467" fill="none" stroke="#111" stroke-width="0.8" /><rect x="473.60" y="51.20" width="11.80" height="11.20" fill="#efefef" /><rect x="473.60" y="62.00" width="12.20" height="0.90" fill="#a4a4a4" /><rect x="485.00" y="51.20" width="0.90" height="11.60" fill="#a4a4a4" /><rect x="473.60" y="51.00" width="11.80" height="0.60" fill="#fdfdfd" /><rect x="473.60" y="51.00" width="0.60" height="11.20" fill="#fdfdfd" /><path d="M479.4 52.6 V61.2 M475 56.9 H483.8 M478.2 54 L479.4 52.6 L480.6 54 M478.2 59.8 L479.4 61.2 L480.6 59.8 M476.4 55.7 L475 56.9 L476.4 58.1 M482.4 55.7 L483.8 56.9 L482.4 58.1" fill="none" stroke="#6e6e6e" stroke-width="0.8" /><rect x="489.00" y="51.20" width="11.80" height="11.20" fill="#efefef" /><rect x="489.00" y="62.00" width="12.20" height="0.90" fill="#a4a4a4" /><rect x="500.40" y="51.20" width="0.90" height="11.60" fill="#a4a4a4" /><rect x="489.00" y="51.00" width="11.80" height="0.60" fill="#fdfdfd" /><rect x="489.00" y="51.00" width="0.60" height="11.20" fill="#fdfdfd" /><rect x="491.00" y="54.20" width="2.40" height="1.20" fill="#111" /><rect x="491.00" y="58.40" width="2.40" height="1.20" fill="#111" /><path d="M494.4 53.2 H499 V60.8 H494.4" fill="none" stroke="#111" stroke-width="0.8" /><rect x="496.20" y="55.00" width="1.20" height="1.40" fill="#111" /><rect x="496.20" y="58.00" width="1.20" height="1.40" fill="#111" /><rect x="504.65" y="52.60" width="0.90" height="8.80" fill="#9a9a9a" /><rect x="511.00" y="52.40" width="4.20" height="9.40" fill="#0a0a0a" /><circle cx="513.10" cy="54.20" r="1.25" fill="#f01818"/><circle cx="513.10" cy="57.10" r="1.25" fill="#e8d820"/><circle cx="513.10" cy="60.00" r="1.25" fill="#28d028"/><path d="M515.6 56 H517.4 V54.6 L519.8 57.4 L517.4 60.2 V58.8 H515.6Z" fill="#e4ecf8" stroke="#8a96a8" stroke-width="0.6" /><path d="M541.0 57.8 L543.8000000000001 60.8" fill="none" stroke="#2430d8" stroke-width="1.6" /><circle cx="538.60" cy="55.20" r="3.10" fill="#f4f4f4" stroke="#1a1a1a" stroke-width="0.9"/><path d="M537.0 55.2 H540.2 M538.6 53.6 V56.8" fill="none" stroke="#111" stroke-width="1.0" /><path d="M554.0 57.8 L556.8000000000001 60.8" fill="none" stroke="#2430d8" stroke-width="1.6" /><circle cx="551.60" cy="55.20" r="3.10" fill="#f4f4f4" stroke="#1a1a1a" stroke-width="0.9"/><path d="M550.0 55.2 H553.2" fill="none" stroke="#444" stroke-width="1.2" /><path d="M567.0 57.8 L569.8000000000001 60.8" fill="none" stroke="#2430d8" stroke-width="1.6" /><circle cx="564.60" cy="55.20" r="3.10" fill="#0c3c78" stroke="#0c2c58" stroke-width="0.9"/><path d="M580.0 57.8 L582.8000000000001 60.8" fill="none" stroke="#2430d8" stroke-width="1.6" /><circle cx="577.60" cy="55.20" r="3.10" fill="#f4f4f4" stroke="#1a1a1a" stroke-width="0.9"/><path d="M577.6 53.2 V57.2 M576.4 55.2 H578.8000000000001" fill="none" stroke="#111" stroke-width="1.0" /><rect x="573.40" y="59.80" width="6.40" height="1.50" fill="#78e0f0" /><rect x="586.60" y="52.40" width="5.00" height="4.40" fill="none" stroke="#a4a4d8" stroke-width="0.7"/><rect x="588.20" y="54.00" width="5.00" height="4.40" fill="#f0f0f0" stroke="#a4a4d8" stroke-width="0.7"/><circle cx="592.20" cy="57.40" r="2.20" fill="#e4e4e4" stroke="#b0b0b0" stroke-width="0.7"/><path d="M593.8000000000001 59.2 L596.2 61.6" fill="none" stroke="#9a9aff" stroke-width="1.3" /><rect x="610.40" y="51.20" width="11.20" height="11.40" fill="#fdfdfd" /><rect x="610.40" y="51.00" width="11.20" height="0.90" fill="#6e6e6e" /><rect x="610.40" y="51.00" width="0.90" height="11.60" fill="#6e6e6e" /><rect x="610.40" y="62.20" width="11.60" height="0.60" fill="#e0e0e0" /><path d="M616.5 53.8 V61.4 M612.4 61.4 H621.2" fill="none" stroke="#2a8a4a" stroke-width="0.9" /><rect x="626.00" y="51.20" width="11.80" height="11.20" fill="#efefef" /><rect x="626.00" y="62.00" width="12.20" height="0.90" fill="#a4a4a4" /><rect x="637.40" y="51.20" width="0.90" height="11.60" fill="#a4a4a4" /><rect x="626.00" y="51.00" width="11.80" height="0.60" fill="#fdfdfd" /><rect x="626.00" y="51.00" width="0.60" height="11.20" fill="#fdfdfd" /><rect x="629.40" y="52.90" width="4.60" height="8.60" fill="#050578" /><path d="M631.7 53 V61.4 M627.2 61.5 H636.4" fill="none" stroke="#2a8a4a" stroke-width="0.8" /><rect x="641.20" y="51.20" width="11.40" height="11.20" fill="#efefef" /><rect x="641.20" y="62.00" width="11.80" height="0.90" fill="#a4a4a4" /><rect x="652.20" y="51.20" width="0.90" height="11.60" fill="#a4a4a4" /><rect x="641.20" y="51.00" width="11.40" height="0.60" fill="#fdfdfd" /><rect x="641.20" y="51.00" width="0.60" height="11.20" fill="#fdfdfd" /><rect x="642.60" y="52.90" width="8.40" height="8.70" fill="#055a14" /><path d="M646.8 53 V61.4" fill="none" stroke="#2a9a3a" stroke-width="0.7" /><rect x="656.75" y="53.00" width="0.90" height="8.60" fill="#9a9a9a" /><rect x="663.00" y="52.90" width="8.90" height="8.70" fill="#9696c4" /><path d="M667.6 53 V61.4 M663 61.5 H672 M668 53.2 H671.8" fill="none" stroke="#a8d8b0" stroke-width="0.7" /><path d="M676.6 61.4 H680.2 V53 H684.8" fill="none" stroke="#a8d8b8" stroke-width="0.9" /><rect x="679.00" y="53.00" width="1.00" height="8.40" fill="#e8e8b0" /><rect x="680.20" y="53.00" width="1.60" height="8.40" fill="#a4a4cc" /><path d="M689 61.4 H693.9 V53 H698" fill="none" stroke="#a8d8b8" stroke-width="0.9" /><path d="M702 61.4 H706.4 V53 H711" fill="none" stroke="#a8d8b8" stroke-width="0.9" /><rect x="706.00" y="53.00" width="1.00" height="8.40" fill="#e4e868" /></svg></div>
<div id="names"><svg width="171" height="490" viewBox="3 68 171 490">
<rect x="3" y="68" width="171" height="1" fill="#fdfdfd"/>
<rect x="3" y="69" width="171" height="0.8" fill="#6a6a6a"/>
<rect x="3" y="69" width="1" height="489" fill="#7c7c7c"/>
<rect x="4" y="81.5" width="5.2" height="438" fill="#ffffff"/>
<rect x="4" y="80.6" width="169" height="1.4" fill="#d6d6d6"/>
<rect x="173" y="69" width="1" height="489" fill="#6c6c6c"/>
<g><path d="M9.3 73 L12.3 69.8 L15 72.2 L12 75.2Z" fill="#b020c8"/><rect x="14.6" y="73" width="4.3" height="4.4" fill="#10a040"/><path d="M9.2 76.4 L12.8 73 L15.8 76 L12.2 79.6Z" fill="#1050e8"/><path d="M12.6 73.4 L15 71.6 L17.2 73.6 L14.8 75.6Z" fill="#10d8f0"/><path d="M21.2 74.3 L24.2 74.3 L22.7 76Z" fill="#111"/></g>
<path d="M25.2 83.70 L29.5 88.00 L25.2 92.30 L20.9 88.00Z" fill="#2a55e0"/>
<path d="M25.2 83.70 L27.4 86.80 L25.2 88.80 L23.0 86.80Z" fill="#6f9cf5"/>
<path d="M25.2 88.80 L27.4 86.80 L29.5 88.00 L25.2 92.30Z" fill="#1b2fb8"/>
<path d="M20.6 89.00 L22.8 89.00 L22.8 87.70 L25.0 89.70 L22.8 91.70 L22.8 90.40 L20.6 90.40Z" fill="#3fe01c" stroke="#1c8010" stroke-width="0.3"/>
<text x="32.2" y="90.05" font-size="6.6" fill="#f4f4f4" text-anchor="start" textLength="79.7" lengthAdjust="spacingAndGlyphs" >/snake_game_vhd_tst/i1/clk</text>
<path d="M25.2 93.76 L29.5 98.06 L25.2 102.36 L20.9 98.06Z" fill="#2a55e0"/>
<path d="M25.2 93.76 L27.4 96.86 L25.2 98.86 L23.0 96.86Z" fill="#6f9cf5"/>
<path d="M25.2 98.86 L27.4 96.86 L29.5 98.06 L25.2 102.36Z" fill="#1b2fb8"/>
<path d="M20.6 99.06 L22.8 99.06 L22.8 97.76 L25.0 99.76 L22.8 101.76 L22.8 100.46 L20.6 100.46Z" fill="#3fe01c" stroke="#1c8010" stroke-width="0.3"/>
<text x="32.2" y="100.11" font-size="6.6" fill="#f4f4f4" text-anchor="start" textLength="95.5" lengthAdjust="spacingAndGlyphs" >/snake_game_vhd_tst/i1/left_btn</text>
<path d="M25.2 103.82 L29.5 108.12 L25.2 112.42 L20.9 108.12Z" fill="#2a55e0"/>
<path d="M25.2 103.82 L27.4 106.92 L25.2 108.92 L23.0 106.92Z" fill="#6f9cf5"/>
<path d="M25.2 108.92 L27.4 106.92 L29.5 108.12 L25.2 112.42Z" fill="#1b2fb8"/>
<path d="M20.6 109.12 L22.8 109.12 L22.8 107.82 L25.0 109.82 L22.8 111.82 L22.8 110.52 L20.6 110.52Z" fill="#3fe01c" stroke="#1c8010" stroke-width="0.3"/>
<text x="32.2" y="110.17" font-size="6.6" fill="#f4f4f4" text-anchor="start" textLength="98.8" lengthAdjust="spacingAndGlyphs" >/snake_game_vhd_tst/i1/right_btn</text>
<path d="M25.2 113.88 L29.5 118.18 L25.2 122.48 L20.9 118.18Z" fill="#2a55e0"/>
<path d="M25.2 113.88 L27.4 116.98 L25.2 118.98 L23.0 116.98Z" fill="#6f9cf5"/>
<path d="M25.2 118.98 L27.4 116.98 L29.5 118.18 L25.2 122.48Z" fill="#1b2fb8"/>
<path d="M20.6 119.18 L22.8 119.18 L22.8 117.88 L25.0 119.88 L22.8 121.88 L22.8 120.58 L20.6 120.58Z" fill="#3fe01c" stroke="#1c8010" stroke-width="0.3"/>
<text x="32.2" y="120.23" font-size="6.6" fill="#f4f4f4" text-anchor="start" textLength="93.2" lengthAdjust="spacingAndGlyphs" >/snake_game_vhd_tst/i1/up_btn</text>
<path d="M25.2 123.94 L29.5 128.24 L25.2 132.54 L20.9 128.24Z" fill="#2a55e0"/>
<path d="M25.2 123.94 L27.4 127.04 L25.2 129.04 L23.0 127.04Z" fill="#6f9cf5"/>
<path d="M25.2 129.04 L27.4 127.04 L29.5 128.24 L25.2 132.54Z" fill="#1b2fb8"/>
<path d="M20.6 129.24 L22.8 129.24 L22.8 127.94 L25.0 129.94 L22.8 131.94 L22.8 130.64 L20.6 130.64Z" fill="#3fe01c" stroke="#1c8010" stroke-width="0.3"/>
<text x="32.2" y="130.29" font-size="6.6" fill="#f4f4f4" text-anchor="start" textLength="101.5" lengthAdjust="spacingAndGlyphs" >/snake_game_vhd_tst/i1/down_btn</text>
<path d="M25.2 134.00 L29.5 138.30 L25.2 142.60 L20.9 138.30Z" fill="#2a55e0"/>
<path d="M25.2 134.00 L27.4 137.10 L25.2 139.10 L23.0 137.10Z" fill="#6f9cf5"/>
<path d="M25.2 139.10 L27.4 137.10 L29.5 138.30 L25.2 142.60Z" fill="#1b2fb8"/>
<path d="M20.6 139.30 L22.8 139.30 L22.8 138.00 L25.0 140.00 L22.8 142.00 L22.8 140.70 L20.6 140.70Z" fill="#3fe01c" stroke="#1c8010" stroke-width="0.3"/>
<text x="32.2" y="140.35" font-size="6.6" fill="#f4f4f4" text-anchor="start" textLength="103.0" lengthAdjust="spacingAndGlyphs" >/snake_game_vhd_tst/i1/speed_btn</text>
<path d="M25.2 144.06 L29.5 148.36 L25.2 152.66 L20.9 148.36Z" fill="#2a55e0"/>
<path d="M25.2 144.06 L27.4 147.16 L25.2 149.16 L23.0 147.16Z" fill="#6f9cf5"/>
<path d="M25.2 149.16 L27.4 147.16 L29.5 148.36 L25.2 152.66Z" fill="#1b2fb8"/>
<path d="M25.3 149.26 L27.4 149.26 L27.4 147.86 L29.799999999999997 150.06 L27.4 152.26 L27.4 150.86 L25.3 150.86Z" fill="#3fe01c" stroke="#1c8010" stroke-width="0.3"/>
<text x="32.2" y="150.41" font-size="6.6" fill="#f4f4f4" text-anchor="start" textLength="89.3" lengthAdjust="spacingAndGlyphs" >/snake_game_vhd_tst/i1/hsync</text>
<path d="M25.2 154.12 L29.5 158.42 L25.2 162.72 L20.9 158.42Z" fill="#2a55e0"/>
<path d="M25.2 154.12 L27.4 157.22 L25.2 159.22 L23.0 157.22Z" fill="#6f9cf5"/>
<path d="M25.2 159.22 L27.4 157.22 L29.5 158.42 L25.2 162.72Z" fill="#1b2fb8"/>
<path d="M25.3 159.32 L27.4 159.32 L27.4 157.92 L29.799999999999997 160.12 L27.4 162.32 L27.4 160.92 L25.3 160.92Z" fill="#3fe01c" stroke="#1c8010" stroke-width="0.3"/>
<text x="32.2" y="160.47" font-size="6.6" fill="#f4f4f4" text-anchor="start" textLength="89.3" lengthAdjust="spacingAndGlyphs" >/snake_game_vhd_tst/i1/vsync</text>
<path d="M25.2 164.18 L29.5 168.48 L25.2 172.78 L20.9 168.48Z" fill="#2a55e0"/>
<path d="M25.2 164.18 L27.4 167.28 L25.2 169.28 L23.0 167.28Z" fill="#6f9cf5"/>
<path d="M25.2 169.28 L27.4 167.28 L29.5 168.48 L25.2 172.78Z" fill="#1b2fb8"/>
<path d="M25.3 169.38 L27.4 169.38 L27.4 167.98 L29.799999999999997 170.18 L27.4 172.38 L27.4 170.98 L25.3 170.98Z" fill="#3fe01c" stroke="#1c8010" stroke-width="0.3"/>
<rect x="12.1" y="166.08" width="5.8" height="5.8" fill="#f3f3f9" stroke="#9a9aa4" stroke-width="0.35"/>
<path d="M13.5 168.98 H16.5 M15 167.48 V170.48" stroke="#111" stroke-width="0.9"/>
<path d="M18 169.08 H20.6" stroke="#b4b4b4" stroke-width="0.7"/>
<text x="32.2" y="170.53" font-size="6.6" fill="#f4f4f4" text-anchor="start" textLength="86.0" lengthAdjust="spacingAndGlyphs" >/snake_game_vhd_tst/i1/color</text>
<path d="M25.2 174.24 L29.5 178.54 L25.2 182.84 L20.9 178.54Z" fill="#2a55e0"/>
<path d="M25.2 174.24 L27.4 177.34 L25.2 179.34 L23.0 177.34Z" fill="#6f9cf5"/>
<path d="M25.2 179.34 L27.4 177.34 L29.5 178.54 L25.2 182.84Z" fill="#1b2fb8"/>
<path d="M25.3 179.44 L27.4 179.44 L27.4 178.04 L29.799999999999997 180.24 L27.4 182.44 L27.4 181.04 L25.3 181.04Z" fill="#3fe01c" stroke="#1c8010" stroke-width="0.3"/>
<text x="32.2" y="180.59" font-size="6.6" fill="#f4f4f4" text-anchor="start" textLength="92.9" lengthAdjust="spacingAndGlyphs" >/snake_game_vhd_tst/i1/led_die</text>
<path d="M25.2 184.30 L29.5 188.60 L25.2 192.90 L20.9 188.60Z" fill="#2a55e0"/>
<path d="M25.2 184.30 L27.4 187.40 L25.2 189.40 L23.0 187.40Z" fill="#6f9cf5"/>
<path d="M25.2 189.40 L27.4 187.40 L29.5 188.60 L25.2 192.90Z" fill="#1b2fb8"/>
<path d="M25.3 189.50 L27.4 189.50 L27.4 188.10 L29.799999999999997 190.30 L27.4 192.50 L27.4 191.10 L25.3 191.10Z" fill="#3fe01c" stroke="#1c8010" stroke-width="0.3"/>
<text x="32.2" y="190.65" font-size="6.6" fill="#f4f4f4" text-anchor="start" textLength="86.6" lengthAdjust="spacingAndGlyphs" >/snake_game_vhd_tst/i1/beep</text>
<path d="M25.2 194.36 L29.5 198.66 L25.2 202.96 L20.9 198.66Z" fill="#2a55e0"/>
<path d="M25.2 194.36 L27.4 197.46 L25.2 199.46 L23.0 197.46Z" fill="#6f9cf5"/>
<path d="M25.2 199.46 L27.4 197.46 L29.5 198.66 L25.2 202.96Z" fill="#1b2fb8"/>
<path d="M25.3 199.56 L27.4 199.56 L27.4 198.16 L29.799999999999997 200.36 L27.4 202.56 L27.4 201.16 L25.3 201.16Z" fill="#3fe01c" stroke="#1c8010" stroke-width="0.3"/>
<rect x="12.1" y="196.26" width="5.8" height="5.8" fill="#f3f3f9" stroke="#9a9aa4" stroke-width="0.35"/>
<path d="M13.5 199.16 H16.5 M15 197.66 V200.66" stroke="#111" stroke-width="0.9"/>
<path d="M18 199.26 H20.6" stroke="#b4b4b4" stroke-width="0.7"/>
<text x="32.2" y="200.71" font-size="6.6" fill="#f4f4f4" text-anchor="start" textLength="91.1" lengthAdjust="spacingAndGlyphs" >/snake_game_vhd_tst/i1/bit_sel</text>
<path d="M25.2 204.42 L29.5 208.72 L25.2 213.02 L20.9 208.72Z" fill="#2a55e0"/>
<path d="M25.2 204.42 L27.4 207.52 L25.2 209.52 L23.0 207.52Z" fill="#6f9cf5"/>
<path d="M25.2 209.52 L27.4 207.52 L29.5 208.72 L25.2 213.02Z" fill="#1b2fb8"/>
<path d="M25.3 209.62 L27.4 209.62 L27.4 208.22 L29.799999999999997 210.42 L27.4 212.62 L27.4 211.22 L25.3 211.22Z" fill="#3fe01c" stroke="#1c8010" stroke-width="0.3"/>
<rect x="12.1" y="206.32" width="5.8" height="5.8" fill="#f3f3f9" stroke="#9a9aa4" stroke-width="0.35"/>
<path d="M13.5 209.22 H16.5 M15 207.72 V210.72" stroke="#111" stroke-width="0.9"/>
<path d="M18 209.32 H20.6" stroke="#b4b4b4" stroke-width="0.7"/>
<text x="32.2" y="210.77" font-size="6.6" fill="#f4f4f4" text-anchor="start" textLength="93.8" lengthAdjust="spacingAndGlyphs" >/snake_game_vhd_tst/i1/seg_sel</text>
<path d="M25.2 214.48 L29.5 218.78 L25.2 223.08 L20.9 218.78Z" fill="#2a55e0"/>
<path d="M25.2 214.48 L27.4 217.58 L25.2 219.58 L23.0 217.58Z" fill="#6f9cf5"/>
<path d="M25.2 219.58 L27.4 217.58 L29.5 218.78 L25.2 223.08Z" fill="#1b2fb8"/>
<text x="32.2" y="220.83" font-size="6.6" fill="#f4f4f4" text-anchor="start" textLength="87.5" lengthAdjust="spacingAndGlyphs" >/snake_game_vhd_tst/i1/rst_n</text>
<path d="M25.2 224.54 L29.5 228.84 L25.2 233.14 L20.9 228.84Z" fill="#2a55e0"/>
<path d="M25.2 224.54 L27.4 227.64 L25.2 229.64 L23.0 227.64Z" fill="#6f9cf5"/>
<path d="M25.2 229.64 L27.4 227.64 L29.5 228.84 L25.2 233.14Z" fill="#1b2fb8"/>
<text x="32.2" y="230.89" font-size="6.6" fill="#f4f4f4" text-anchor="start" textLength="87.5" lengthAdjust="spacingAndGlyphs" >/snake_game_vhd_tst/i1/rst_p</text>
<path d="M25.2 234.60 L29.5 238.90 L25.2 243.20 L20.9 238.90Z" fill="#2a55e0"/>
<path d="M25.2 234.60 L27.4 237.70 L25.2 239.70 L23.0 237.70Z" fill="#6f9cf5"/>
<path d="M25.2 239.70 L27.4 237.70 L29.5 238.90 L25.2 243.20Z" fill="#1b2fb8"/>
<text x="32.2" y="240.95" font-size="6.6" fill="#f4f4f4" text-anchor="start" textLength="102.4" lengthAdjust="spacingAndGlyphs" >/snake_game_vhd_tst/i1/clk_25mHz</text>
<path d="M25.2 244.66 L29.5 248.96 L25.2 253.26 L20.9 248.96Z" fill="#2a55e0"/>
<path d="M25.2 244.66 L27.4 247.76 L25.2 249.76 L23.0 247.76Z" fill="#6f9cf5"/>
<path d="M25.2 249.76 L27.4 247.76 L29.5 248.96 L25.2 253.26Z" fill="#1b2fb8"/>
<text x="32.2" y="251.01" font-size="6.6" fill="#f4f4f4" text-anchor="start" textLength="101.4" lengthAdjust="spacingAndGlyphs" >/snake_game_vhd_tst/i1/add_block</text>
<path d="M25.2 254.72 L29.5 259.02 L25.2 263.32 L20.9 259.02Z" fill="#2a55e0"/>
<path d="M25.2 254.72 L27.4 257.82 L25.2 259.82 L23.0 257.82Z" fill="#6f9cf5"/>
<path d="M25.2 259.82 L27.4 257.82 L29.5 259.02 L25.2 263.32Z" fill="#1b2fb8"/>
<rect x="12.1" y="256.62" width="5.8" height="5.8" fill="#f3f3f9" stroke="#9a9aa4" stroke-width="0.35"/>
<path d="M13.5 259.52 H16.5 M15 258.02 V261.02" stroke="#111" stroke-width="0.9"/>
<path d="M18 259.62 H20.6" stroke="#b4b4b4" stroke-width="0.7"/>
<text x="32.2" y="261.07" font-size="6.6" fill="#f4f4f4" text-anchor="start" textLength="106.5" lengthAdjust="spacingAndGlyphs" >/snake_game_vhd_tst/i1/game_state</text>
<path d="M25.2 264.78 L29.5 269.08 L25.2 273.38 L20.9 269.08Z" fill="#2a55e0"/>
<path d="M25.2 264.78 L27.4 267.88 L25.2 269.88 L23.0 267.88Z" fill="#6f9cf5"/>
<path d="M25.2 269.88 L27.4 267.88 L29.5 269.08 L25.2 273.38Z" fill="#1b2fb8"/>
<text x="32.2" y="271.13" font-size="6.6" fill="#f4f4f4" text-anchor="start" textLength="114.2" lengthAdjust="spacingAndGlyphs" >/snake_game_vhd_tst/i1/left_btn_press</text>
<path d="M25.2 274.84 L29.5 279.14 L25.2 283.44 L20.9 279.14Z" fill="#2a55e0"/>
<path d="M25.2 274.84 L27.4 277.94 L25.2 279.94 L23.0 277.94Z" fill="#6f9cf5"/>
<path d="M25.2 279.94 L27.4 277.94 L29.5 279.14 L25.2 283.44Z" fill="#1b2fb8"/>
<text x="32.2" y="281.19" font-size="6.6" fill="#f4f4f4" text-anchor="start" textLength="117.6" lengthAdjust="spacingAndGlyphs" >/snake_game_vhd_tst/i1/right_btn_press</text>
<path d="M25.2 284.90 L29.5 289.20 L25.2 293.50 L20.9 289.20Z" fill="#2a55e0"/>
<path d="M25.2 284.90 L27.4 288.00 L25.2 290.00 L23.0 288.00Z" fill="#6f9cf5"/>
<path d="M25.2 290.00 L27.4 288.00 L29.5 289.20 L25.2 293.50Z" fill="#1b2fb8"/>
<text x="32.2" y="291.25" font-size="6.6" fill="#f4f4f4" text-anchor="start" textLength="111.7" lengthAdjust="spacingAndGlyphs" >/snake_game_vhd_tst/i1/up_btn_press</text>
<path d="M25.2 294.96 L29.5 299.26 L25.2 303.56 L20.9 299.26Z" fill="#2a55e0"/>
<path d="M25.2 294.96 L27.4 298.06 L25.2 300.06 L23.0 298.06Z" fill="#6f9cf5"/>
<path d="M25.2 300.06 L27.4 298.06 L29.5 299.26 L25.2 303.56Z" fill="#1b2fb8"/>
<text x="32.2" y="301.31" font-size="6.6" fill="#f4f4f4" text-anchor="start" textLength="120.1" lengthAdjust="spacingAndGlyphs" >/snake_game_vhd_tst/i1/down_btn_press</text>
<path d="M25.2 305.02 L29.5 309.32 L25.2 313.62 L20.9 309.32Z" fill="#2a55e0"/>
<path d="M25.2 305.02 L27.4 308.12 L25.2 310.12 L23.0 308.12Z" fill="#6f9cf5"/>
<path d="M25.2 310.12 L27.4 308.12 L29.5 309.32 L25.2 313.62Z" fill="#1b2fb8"/>
<text x="32.2" y="311.37" font-size="6.6" fill="#f4f4f4" text-anchor="start" textLength="121.9" lengthAdjust="spacingAndGlyphs" >/snake_game_vhd_tst/i1/speed_btn_press</text>
<path d="M25.2 315.08 L29.5 319.38 L25.2 323.68 L20.9 319.38Z" fill="#2a55e0"/>
<path d="M25.2 315.08 L27.4 318.18 L25.2 320.18 L23.0 318.18Z" fill="#6f9cf5"/>
<path d="M25.2 320.18 L27.4 318.18 L29.5 319.38 L25.2 323.68Z" fill="#1b2fb8"/>
<rect x="12.1" y="316.98" width="5.8" height="5.8" fill="#f3f3f9" stroke="#9a9aa4" stroke-width="0.35"/>
<path d="M13.5 319.88 H16.5 M15 318.38 V321.38" stroke="#111" stroke-width="0.9"/>
<path d="M18 319.98 H20.6" stroke="#b4b4b4" stroke-width="0.7"/>
<text x="32.2" y="321.43" font-size="6.6" fill="#f4f4f4" text-anchor="start" textLength="96.0" lengthAdjust="spacingAndGlyphs" >/snake_game_vhd_tst/i1/x_coord</text>
<path d="M25.2 325.14 L29.5 329.44 L25.2 333.74 L20.9 329.44Z" fill="#2a55e0"/>
<path d="M25.2 325.14 L27.4 328.24 L25.2 330.24 L23.0 328.24Z" fill="#6f9cf5"/>
<path d="M25.2 330.24 L27.4 328.24 L29.5 329.44 L25.2 333.74Z" fill="#1b2fb8"/>
<rect x="12.1" y="327.04" width="5.8" height="5.8" fill="#f3f3f9" stroke="#9a9aa4" stroke-width="0.35"/>
<path d="M13.5 329.94 H16.5 M15 328.44 V331.44" stroke="#111" stroke-width="0.9"/>
<path d="M18 330.04 H20.6" stroke="#b4b4b4" stroke-width="0.7"/>
<text x="32.2" y="331.49" font-size="6.6" fill="#f4f4f4" text-anchor="start" textLength="96.0" lengthAdjust="spacingAndGlyphs" >/snake_game_vhd_tst/i1/y_coord</text>
<path d="M25.2 335.20 L29.5 339.50 L25.2 343.80 L20.9 339.50Z" fill="#2a55e0"/>
<path d="M25.2 335.20 L27.4 338.30 L25.2 340.30 L23.0 338.30Z" fill="#6f9cf5"/>
<path d="M25.2 340.30 L27.4 338.30 L29.5 339.50 L25.2 343.80Z" fill="#1b2fb8"/>
<rect x="12.1" y="337.10" width="5.8" height="5.8" fill="#f3f3f9" stroke="#9a9aa4" stroke-width="0.35"/>
<path d="M13.5 340.00 H16.5 M15 338.50 V341.50" stroke="#111" stroke-width="0.9"/>
<path d="M18 340.10 H20.6" stroke="#b4b4b4" stroke-width="0.7"/>
<text x="32.2" y="341.55" font-size="6.6" fill="#f4f4f4" text-anchor="start" textLength="92.6" lengthAdjust="spacingAndGlyphs" >/snake_game_vhd_tst/i1/food_x</text>
<path d="M25.2 345.26 L29.5 349.56 L25.2 353.86 L20.9 349.56Z" fill="#2a55e0"/>
<path d="M25.2 345.26 L27.4 348.36 L25.2 350.36 L23.0 348.36Z" fill="#6f9cf5"/>
<path d="M25.2 350.36 L27.4 348.36 L29.5 349.56 L25.2 353.86Z" fill="#1b2fb8"/>
<rect x="12.1" y="347.16" width="5.8" height="5.8" fill="#f3f3f9" stroke="#9a9aa4" stroke-width="0.35"/>
<path d="M13.5 350.06 H16.5 M15 348.56 V351.56" stroke="#111" stroke-width="0.9"/>
<path d="M18 350.16 H20.6" stroke="#b4b4b4" stroke-width="0.7"/>
<text x="32.2" y="351.61" font-size="6.6" fill="#f4f4f4" text-anchor="start" textLength="92.6" lengthAdjust="spacingAndGlyphs" >/snake_game_vhd_tst/i1/food_y</text>
<path d="M25.2 355.32 L29.5 359.62 L25.2 363.92 L20.9 359.62Z" fill="#2a55e0"/>
<path d="M25.2 355.32 L27.4 358.42 L25.2 360.42 L23.0 358.42Z" fill="#6f9cf5"/>
<path d="M25.2 360.42 L27.4 358.42 L29.5 359.62 L25.2 363.92Z" fill="#1b2fb8"/>
<rect x="12.1" y="357.22" width="5.8" height="5.8" fill="#f3f3f9" stroke="#9a9aa4" stroke-width="0.35"/>
<path d="M13.5 360.12 H16.5 M15 358.62 V361.62" stroke="#111" stroke-width="0.9"/>
<path d="M18 360.22 H20.6" stroke="#b4b4b4" stroke-width="0.7"/>
<text x="32.2" y="361.67" font-size="6.6" fill="#f4f4f4" text-anchor="start" textLength="94.2" lengthAdjust="spacingAndGlyphs" >/snake_game_vhd_tst/i1/head_x</text>
<path d="M25.2 365.38 L29.5 369.68 L25.2 373.98 L20.9 369.68Z" fill="#2a55e0"/>
<path d="M25.2 365.38 L27.4 368.48 L25.2 370.48 L23.0 368.48Z" fill="#6f9cf5"/>
<path d="M25.2 370.48 L27.4 368.48 L29.5 369.68 L25.2 373.98Z" fill="#1b2fb8"/>
<rect x="12.1" y="367.28" width="5.8" height="5.8" fill="#f3f3f9" stroke="#9a9aa4" stroke-width="0.35"/>
<path d="M13.5 370.18 H16.5 M15 368.68 V371.68" stroke="#111" stroke-width="0.9"/>
<path d="M18 370.28 H20.6" stroke="#b4b4b4" stroke-width="0.7"/>
<text x="32.2" y="371.73" font-size="6.6" fill="#f4f4f4" text-anchor="start" textLength="94.2" lengthAdjust="spacingAndGlyphs" >/snake_game_vhd_tst/i1/head_y</text>
<path d="M25.2 375.44 L29.5 379.74 L25.2 384.04 L20.9 379.74Z" fill="#2a55e0"/>
<path d="M25.2 375.44 L27.4 378.54 L25.2 380.54 L23.0 378.54Z" fill="#6f9cf5"/>
<path d="M25.2 380.54 L27.4 378.54 L29.5 379.74 L25.2 384.04Z" fill="#1b2fb8"/>
<text x="32.2" y="381.79" font-size="6.6" fill="#f4f4f4" text-anchor="start" textLength="105.9" lengthAdjust="spacingAndGlyphs" >/snake_game_vhd_tst/i1/body_crash</text>
<path d="M25.2 385.50 L29.5 389.80 L25.2 394.10 L20.9 389.80Z" fill="#2a55e0"/>
<path d="M25.2 385.50 L27.4 388.60 L25.2 390.60 L23.0 388.60Z" fill="#6f9cf5"/>
<path d="M25.2 390.60 L27.4 388.60 L29.5 389.80 L25.2 394.10Z" fill="#1b2fb8"/>
<text x="32.2" y="391.85" font-size="6.6" fill="#f4f4f4" text-anchor="start" textLength="102.5" lengthAdjust="spacingAndGlyphs" >/snake_game_vhd_tst/i1/wall_crash</text>
<path d="M25.2 395.56 L29.5 399.86 L25.2 404.16 L20.9 399.86Z" fill="#2a55e0"/>
<path d="M25.2 395.56 L27.4 398.66 L25.2 400.66 L23.0 398.66Z" fill="#6f9cf5"/>
<path d="M25.2 400.66 L27.4 398.66 L29.5 399.86 L25.2 404.16Z" fill="#1b2fb8"/>
<text x="32.2" y="401.91" font-size="6.6" fill="#f4f4f4" text-anchor="start" textLength="96.9" lengthAdjust="spacingAndGlyphs" >/snake_game_vhd_tst/i1/die_blink</text>
<path d="M25.2 405.62 L29.5 409.92 L25.2 414.22 L20.9 409.92Z" fill="#2a55e0"/>
<path d="M25.2 405.62 L27.4 408.72 L25.2 410.72 L23.0 408.72Z" fill="#6f9cf5"/>
<path d="M25.2 410.72 L27.4 408.72 L29.5 409.92 L25.2 414.22Z" fill="#1b2fb8"/>
<text x="32.2" y="411.97" font-size="6.6" fill="#f4f4f4" text-anchor="start" textLength="92.3" lengthAdjust="spacingAndGlyphs" >/snake_game_vhd_tst/i1/restart</text>
<path d="M10.5 415.6 H172" stroke="#1a1a1a" stroke-width="0.8"/><path d="M10 413.8 L12 415.6 L10 417.4Z" fill="#1a1a1a"/>
<rect x="4" y="520.2" width="169" height="1.2" fill="#d0d0d0"/>
<text x="167" y="530.5" font-size="6.7" fill="#f4f4f4" text-anchor="end" textLength="12.5" lengthAdjust="spacingAndGlyphs" >Now</text>
<rect x="32.7" y="535.2" width="140.3" height="9.3" fill="#ffffff"/>
<text x="167" y="542.0" font-size="6.7" fill="#3a3a3a" text-anchor="end" textLength="25" lengthAdjust="spacingAndGlyphs" >Cursor 1</text>
<g><rect x="9.2" y="525.5" width="4.4" height="3.6" fill="#c8d4e6"/><path d="M9 530.4 H14.5" stroke="#2a62c8" stroke-width="0.9"/><rect x="16" y="525" width="6.3" height="6.2" rx="0.8" fill="#5a8fe0"/><rect x="17" y="527" width="4.3" height="2.6" fill="#dfe9f8"/><circle cx="26.5" cy="528" r="3.1" fill="#3cb83c"/><path d="M26.5 526.2 V529.8 M24.7 528 H28.3" stroke="#e8ffe8" stroke-width="0.9"/></g>
<g><rect x="11.2" y="539" width="5.6" height="4.6" fill="#e8b830"/><path d="M12.2 539 V537.6 A1.8 1.8 0 0 1 15.8 537.6" stroke="#c8c8c8" stroke-width="0.9" fill="none"/><path d="M19 543.4 L23.6 537.4" stroke="#3f7fe0" stroke-width="1.6"/><circle cx="28.8" cy="539.7" r="3.1" fill="#e04040"/><rect x="26.9" y="539.1" width="3.8" height="1.2" fill="#ffe8e8"/></g>
<rect x="4" y="545.3" width="169" height="1" fill="#d8d8d8"/>
<rect x="9" y="546.6" width="164" height="10.6" fill="#eeeeee"/>
<rect x="9" y="546.6" width="9.6" height="10.6" fill="#fbfbfb" stroke="#cfcfcf" stroke-width="0.5"/>
<path d="M14.6 549.8 L12.2 552 L14.6 554.2Z" fill="#8c8c8c"/>
<rect x="164" y="546.6" width="9" height="10.6" fill="#f6f6f6" stroke="#d4d4d4" stroke-width="0.5"/>
<path d="M167.6 549.8 L170 552 L167.6 554.2Z" fill="#8c8c8c"/>
<rect x="3" y="557.3" width="171" height="1.0" fill="#8c8c8c"/>
</svg></div>
<div id="values"><svg width="62" height="490" viewBox="174 68 62 490">
<rect x="174" y="68" width="62" height="1" fill="#fdfdfd"/>
<rect x="174" y="69" width="62" height="0.8" fill="#6a6a6a"/>
<rect x="174" y="69" width="1.1" height="489" fill="#fafafa"/>
<rect x="235" y="69" width="1" height="489" fill="#f4f4f4"/>
<rect x="234.2" y="69" width="0.8" height="489" fill="#707070"/>
<rect x="175" y="80.6" width="59.5" height="1.4" fill="#d6d6d6"/>
<text x="231.8" y="77.1" font-size="6.7" fill="#f0f0f0" text-anchor="end" textLength="14.5" lengthAdjust="spacingAndGlyphs" >Msgs</text>
<text x="176.8" y="90.30" font-size="6.7" fill="#f4f4f4" text-anchor="start" textLength="27.3" lengthAdjust="spacingAndGlyphs" >-No Data-</text>
<text x="176.8" y="100.36" font-size="6.7" fill="#f4f4f4" text-anchor="start" textLength="27.3" lengthAdjust="spacingAndGlyphs" >-No Data-</text>
<text x="176.8" y="110.42" font-size="6.7" fill="#f4f4f4" text-anchor="start" textLength="27.3" lengthAdjust="spacingAndGlyphs" >-No Data-</text>
<text x="176.8" y="120.48" font-size="6.7" fill="#f4f4f4" text-anchor="start" textLength="27.3" lengthAdjust="spacingAndGlyphs" >-No Data-</text>
<text x="176.8" y="130.54" font-size="6.7" fill="#f4f4f4" text-anchor="start" textLength="27.3" lengthAdjust="spacingAndGlyphs" >-No Data-</text>
<text x="176.8" y="140.60" font-size="6.7" fill="#f4f4f4" text-anchor="start" textLength="27.3" lengthAdjust="spacingAndGlyphs" >-No Data-</text>
<text x="176.8" y="150.66" font-size="6.7" fill="#f4f4f4" text-anchor="start" textLength="27.3" lengthAdjust="spacingAndGlyphs" >-No Data-</text>
<text x="176.8" y="160.72" font-size="6.7" fill="#f4f4f4" text-anchor="start" textLength="27.3" lengthAdjust="spacingAndGlyphs" >-No Data-</text>
<text x="176.8" y="170.78" font-size="6.7" fill="#f4f4f4" text-anchor="start" textLength="27.3" lengthAdjust="spacingAndGlyphs" >-No Data-</text>
<text x="176.8" y="180.84" font-size="6.7" fill="#f4f4f4" text-anchor="start" textLength="27.3" lengthAdjust="spacingAndGlyphs" >-No Data-</text>
<text x="176.8" y="190.90" font-size="6.7" fill="#f4f4f4" text-anchor="start" textLength="27.3" lengthAdjust="spacingAndGlyphs" >-No Data-</text>
<text x="176.8" y="200.96" font-size="6.7" fill="#f4f4f4" text-anchor="start" textLength="27.3" lengthAdjust="spacingAndGlyphs" >-No Data-</text>
<text x="176.8" y="211.02" font-size="6.7" fill="#f4f4f4" text-anchor="start" textLength="27.3" lengthAdjust="spacingAndGlyphs" >-No Data-</text>
<text x="176.8" y="221.08" font-size="6.7" fill="#f4f4f4" text-anchor="start" textLength="27.3" lengthAdjust="spacingAndGlyphs" >-No Data-</text>
<text x="176.8" y="231.14" font-size="6.7" fill="#f4f4f4" text-anchor="start" textLength="27.3" lengthAdjust="spacingAndGlyphs" >-No Data-</text>
<text x="176.8" y="241.20" font-size="6.7" fill="#f4f4f4" text-anchor="start" textLength="27.3" lengthAdjust="spacingAndGlyphs" >-No Data-</text>
<text x="176.8" y="251.26" font-size="6.7" fill="#f4f4f4" text-anchor="start" textLength="27.3" lengthAdjust="spacingAndGlyphs" >-No Data-</text>
<text x="176.8" y="261.32" font-size="6.7" fill="#f4f4f4" text-anchor="start" textLength="27.3" lengthAdjust="spacingAndGlyphs" >-No Data-</text>
<text x="176.8" y="271.38" font-size="6.7" fill="#f4f4f4" text-anchor="start" textLength="27.3" lengthAdjust="spacingAndGlyphs" >-No Data-</text>
<text x="176.8" y="281.44" font-size="6.7" fill="#f4f4f4" text-anchor="start" textLength="27.3" lengthAdjust="spacingAndGlyphs" >-No Data-</text>
<text x="176.8" y="291.50" font-size="6.7" fill="#f4f4f4" text-anchor="start" textLength="27.3" lengthAdjust="spacingAndGlyphs" >-No Data-</text>
<text x="176.8" y="301.56" font-size="6.7" fill="#f4f4f4" text-anchor="start" textLength="27.3" lengthAdjust="spacingAndGlyphs" >-No Data-</text>
<text x="176.8" y="311.62" font-size="6.7" fill="#f4f4f4" text-anchor="start" textLength="27.3" lengthAdjust="spacingAndGlyphs" >-No Data-</text>
<text x="176.8" y="321.68" font-size="6.7" fill="#f4f4f4" text-anchor="start" textLength="27.3" lengthAdjust="spacingAndGlyphs" >-No Data-</text>
<text x="176.8" y="331.74" font-size="6.7" fill="#f4f4f4" text-anchor="start" textLength="27.3" lengthAdjust="spacingAndGlyphs" >-No Data-</text>
<text x="176.8" y="341.80" font-size="6.7" fill="#f4f4f4" text-anchor="start" textLength="27.3" lengthAdjust="spacingAndGlyphs" >-No Data-</text>
<text x="176.8" y="351.86" font-size="6.7" fill="#f4f4f4" text-anchor="start" textLength="27.3" lengthAdjust="spacingAndGlyphs" >-No Data-</text>
<text x="176.8" y="361.92" font-size="6.7" fill="#f4f4f4" text-anchor="start" textLength="27.3" lengthAdjust="spacingAndGlyphs" >-No Data-</text>
<text x="176.8" y="371.98" font-size="6.7" fill="#f4f4f4" text-anchor="start" textLength="27.3" lengthAdjust="spacingAndGlyphs" >-No Data-</text>
<text x="176.8" y="382.04" font-size="6.7" fill="#f4f4f4" text-anchor="start" textLength="27.3" lengthAdjust="spacingAndGlyphs" >-No Data-</text>
<text x="176.8" y="392.10" font-size="6.7" fill="#f4f4f4" text-anchor="start" textLength="27.3" lengthAdjust="spacingAndGlyphs" >-No Data-</text>
<text x="176.8" y="402.16" font-size="6.7" fill="#f4f4f4" text-anchor="start" textLength="27.3" lengthAdjust="spacingAndGlyphs" >-No Data-</text>
<text x="176.8" y="412.22" font-size="6.7" fill="#f4f4f4" text-anchor="start" textLength="27.3" lengthAdjust="spacingAndGlyphs" >-No Data-</text>
<path d="M176.5 415.6 H233" stroke="#1a1a1a" stroke-width="0.8"/>
<rect x="175" y="520.2" width="59.5" height="1.2" fill="#d0d0d0"/>
<text x="229" y="530.5" font-size="6.7" fill="#f4f4f4" text-anchor="end" textLength="40" lengthAdjust="spacingAndGlyphs" >722780000 ps</text>
<rect x="175.2" y="535.2" width="59" height="9.3" fill="#ffffff"/>
<text x="229" y="542.0" font-size="6.7" fill="#3a3a3a" text-anchor="end" textLength="40" lengthAdjust="spacingAndGlyphs" >900714579 ps</text>
<rect x="175" y="545.3" width="59.5" height="1" fill="#d8d8d8"/>
<rect x="175.2" y="546.6" width="59" height="10.6" fill="#eeeeee"/>
<rect x="175.2" y="546.6" width="9.4" height="10.6" fill="#f8f8f8" stroke="#d4d4d4" stroke-width="0.5"/>
<path d="M181.2 549.8 L178.8 552 L181.2 554.2Z" fill="#8c8c8c"/>
<rect x="225" y="546.6" width="9.2" height="10.6" fill="#f8f8f8" stroke="#d4d4d4" stroke-width="0.5"/>
<path d="M228.6 549.8 L231 552 L228.6 554.2Z" fill="#8c8c8c"/>
<rect x="174" y="557.3" width="62" height="1.0" fill="#8c8c8c"/>
</svg></div>
<div id="wtop"></div>
<div id="waves"><svg width="844" height="477" viewBox="236 69 844 477" shape-rendering="geometricPrecision">
<rect x="236" y="80.1" width="844" height="1.8" fill="#c6c6c6"/>
<path d="M294.50 82V521M352.50 82V521M411.50 82V521M469.50 82V521M528.50 82V521M586.50 82V521M644.50 82V521M703.50 82V521M761.50 82V521M820.50 82V521M878.50 82V521M937.50 82V521M995.50 82V521M1053.50 82V521" stroke="#545454" stroke-width="1" fill="none"/>
<rect x="236.0" y="84.65" width="844" height="7.3" fill="#00ff00"/>
<rect x="236.0" y="235.55" width="844" height="7.3" fill="#00ff00"/>
<rect x="236.0" y="194.56" width="844" height="8.60" fill="#c2ffc2"/>
<path d="M237.90 195.46V202.26M239.57 195.46V202.26M241.24 195.46V202.26M242.91 195.46V202.26M244.58 195.46V202.26M246.25 195.46V202.26M247.92 195.46V202.26M249.59 195.46V202.26M251.26 195.46V202.26M252.93 195.46V202.26M254.60 195.46V202.26M256.27 195.46V202.26M257.94 195.46V202.26M259.61 195.46V202.26M261.28 195.46V202.26M262.95 195.46V202.26M264.62 195.46V202.26M266.29 195.46V202.26M267.96 195.46V202.26M269.63 195.46V202.26M271.30 195.46V202.26M272.97 195.46V202.26M274.64 195.46V202.26M276.31 195.46V202.26M277.98 195.46V202.26M279.65 195.46V202.26M281.32 195.46V202.26M282.99 195.46V202.26M284.66 195.46V202.26M286.33 195.46V202.26M288.00 195.46V202.26M289.67 195.46V202.26M291.34 195.46V202.26M293.01 195.46V202.26M294.68 195.46V202.26M296.35 195.46V202.26M298.02 195.46V202.26M299.69 195.46V202.26M301.36 195.46V202.26M303.03 195.46V202.26M304.70 195.46V202.26M306.37 195.46V202.26M308.04 195.46V202.26M309.71 195.46V202.26M311.38 195.46V202.26M313.05 195.46V202.26M314.72 195.46V202.26M316.39 195.46V202.26M318.06 195.46V202.26M319.73 195.46V202.26M321.40 195.46V202.26M323.07 195.46V202.26M324.74 195.46V202.26M326.41 195.46V202.26M328.08 195.46V202.26M329.75 195.46V202.26M331.42 195.46V202.26M333.09 195.46V202.26M334.76 195.46V202.26M336.43 195.46V202.26M338.10 195.46V202.26M339.77 195.46V202.26M341.44 195.46V202.26M343.11 195.46V202.26M344.78 195.46V202.26M346.45 195.46V202.26M348.12 195.46V202.26M349.79 195.46V202.26M351.46 195.46V202.26M353.13 195.46V202.26M354.80 195.46V202.26M356.47 195.46V202.26M358.14 195.46V202.26M359.81 195.46V202.26M361.48 195.46V202.26M363.15 195.46V202.26M364.82 195.46V202.26M366.49 195.46V202.26M368.16 195.46V202.26M369.83 195.46V202.26M371.50 195.46V202.26M373.17 195.46V202.26M374.84 195.46V202.26M376.51 195.46V202.26M378.18 195.46V202.26M379.85 195.46V202.26M381.52 195.46V202.26M383.19 195.46V202.26M384.86 195.46V202.26M386.53 195.46V202.26M388.20 195.46V202.26M389.87 195.46V202.26M391.54 195.46V202.26M393.21 195.46V202.26M394.88 195.46V202.26M396.55 195.46V202.26M398.22 195.46V202.26M399.89 195.46V202.26M401.56 195.46V202.26M403.23 195.46V202.26M404.90 195.46V202.26M406.57 195.46V202.26M408.24 195.46V202.26M409.91 195.46V202.26M411.58 195.46V202.26M413.25 195.46V202.26M414.92 195.46V202.26M416.59 195.46V202.26M418.26 195.46V202.26M419.93 195.46V202.26M421.60 195.46V202.26M423.27 195.46V202.26M424.94 195.46V202.26M426.61 195.46V202.26M428.28 195.46V202.26M429.95 195.46V202.26M431.62 195.46V202.26M433.29 195.46V202.26M434.96 195.46V202.26M436.63 195.46V202.26M438.30 195.46V202.26M439.97 195.46V202.26M441.64 195.46V202.26M443.31 195.46V202.26M444.98 195.46V202.26M446.65 195.46V202.26M448.32 195.46V202.26M449.99 195.46V202.26M451.66 195.46V202.26M453.33 195.46V202.26M455.00 195.46V202.26M456.67 195.46V202.26M458.34 195.46V202.26M460.01 195.46V202.26M461.68 195.46V202.26M463.35 195.46V202.26M465.02 195.46V202.26M466.69 195.46V202.26M468.36 195.46V202.26M470.03 195.46V202.26M471.70 195.46V202.26M473.37 195.46V202.26M475.04 195.46V202.26M476.71 195.46V202.26M478.38 195.46V202.26M480.05 195.46V202.26M481.72 195.46V202.26M483.39 195.46V202.26M485.06 195.46V202.26M486.73 195.46V202.26M488.40 195.46V202.26M490.07 195.46V202.26M491.74 195.46V202.26M493.41 195.46V202.26M495.08 195.46V202.26M496.75 195.46V202.26M498.42 195.46V202.26M500.09 195.46V202.26M501.76 195.46V202.26M503.43 195.46V202.26M505.10 195.46V202.26M506.77 195.46V202.26M508.44 195.46V202.26M510.11 195.46V202.26M511.78 195.46V202.26M513.45 195.46V202.26M515.12 195.46V202.26M516.79 195.46V202.26M518.46 195.46V202.26M520.13 195.46V202.26M521.80 195.46V202.26M523.47 195.46V202.26M525.14 195.46V202.26M526.81 195.46V202.26M528.48 195.46V202.26M530.15 195.46V202.26M531.82 195.46V202.26M533.49 195.46V202.26M535.16 195.46V202.26M536.83 195.46V202.26M538.50 195.46V202.26M540.17 195.46V202.26M541.84 195.46V202.26M543.51 195.46V202.26M545.18 195.46V202.26M546.85 195.46V202.26M548.52 195.46V202.26M550.19 195.46V202.26M551.86 195.46V202.26M553.53 195.46V202.26M555.20 195.46V202.26M556.87 195.46V202.26M558.54 195.46V202.26M560.21 195.46V202.26M561.88 195.46V202.26M563.55 195.46V202.26M565.22 195.46V202.26M566.89 195.46V202.26M568.56 195.46V202.26M570.23 195.46V202.26M571.90 195.46V202.26M573.57 195.46V202.26M575.24 195.46V202.26M576.91 195.46V202.26M578.58 195.46V202.26M580.25 195.46V202.26M581.92 195.46V202.26M583.59 195.46V202.26M585.26 195.46V202.26M586.93 195.46V202.26M588.60 195.46V202.26M590.27 195.46V202.26M591.94 195.46V202.26M593.61 195.46V202.26M595.28 195.46V202.26M596.95 195.46V202.26M598.62 195.46V202.26M600.29 195.46V202.26M601.96 195.46V202.26M603.63 195.46V202.26M605.30 195.46V202.26M606.97 195.46V202.26M608.64 195.46V202.26M610.31 195.46V202.26M611.98 195.46V202.26M613.65 195.46V202.26M615.32 195.46V202.26M616.99 195.46V202.26M618.66 195.46V202.26M620.33 195.46V202.26M622.00 195.46V202.26M623.67 195.46V202.26M625.34 195.46V202.26M627.01 195.46V202.26M628.68 195.46V202.26M630.35 195.46V202.26M632.02 195.46V202.26M633.69 195.46V202.26M635.36 195.46V202.26M637.03 195.46V202.26M638.70 195.46V202.26M640.37 195.46V202.26M642.04 195.46V202.26M643.71 195.46V202.26M645.38 195.46V202.26M647.05 195.46V202.26M648.72 195.46V202.26M650.39 195.46V202.26M652.06 195.46V202.26M653.73 195.46V202.26M655.40 195.46V202.26M657.07 195.46V202.26M658.74 195.46V202.26M660.41 195.46V202.26M662.08 195.46V202.26M663.75 195.46V202.26M665.42 195.46V202.26M667.09 195.46V202.26M668.76 195.46V202.26M670.43 195.46V202.26M672.10 195.46V202.26M673.77 195.46V202.26M675.44 195.46V202.26M677.11 195.46V202.26M678.78 195.46V202.26M680.45 195.46V202.26M682.12 195.46V202.26M683.79 195.46V202.26M685.46 195.46V202.26M687.13 195.46V202.26M688.80 195.46V202.26M690.47 195.46V202.26M692.14 195.46V202.26M693.81 195.46V202.26M695.48 195.46V202.26M697.15 195.46V202.26M698.82 195.46V202.26M700.49 195.46V202.26M702.16 195.46V202.26M703.83 195.46V202.26M705.50 195.46V202.26M707.17 195.46V202.26M708.84 195.46V202.26M710.51 195.46V202.26M712.18 195.46V202.26M713.85 195.46V202.26M715.52 195.46V202.26M717.19 195.46V202.26M718.86 195.46V202.26M720.53 195.46V202.26M722.20 195.46V202.26M723.87 195.46V202.26M725.54 195.46V202.26M727.21 195.46V202.26M728.88 195.46V202.26M730.55 195.46V202.26M732.22 195.46V202.26M733.89 195.46V202.26M735.56 195.46V202.26M737.23 195.46V202.26M738.90 195.46V202.26M740.57 195.46V202.26M742.24 195.46V202.26M743.91 195.46V202.26M745.58 195.46V202.26M747.25 195.46V202.26M748.92 195.46V202.26M750.59 195.46V202.26M752.26 195.46V202.26M753.93 195.46V202.26M755.60 195.46V202.26M757.27 195.46V202.26M758.94 195.46V202.26M760.61 195.46V202.26M762.28 195.46V202.26M763.95 195.46V202.26M765.62 195.46V202.26M767.29 195.46V202.26M768.96 195.46V202.26M770.63 195.46V202.26M772.30 195.46V202.26M773.97 195.46V202.26M775.64 195.46V202.26M777.31 195.46V202.26M778.98 195.46V202.26M780.65 195.46V202.26M782.32 195.46V202.26M783.99 195.46V202.26M785.66 195.46V202.26M787.33 195.46V202.26M789.00 195.46V202.26M790.67 195.46V202.26M792.34 195.46V202.26M794.01 195.46V202.26M795.68 195.46V202.26M797.35 195.46V202.26M799.02 195.46V202.26M800.69 195.46V202.26M802.36 195.46V202.26M804.03 195.46V202.26M805.70 195.46V202.26M807.37 195.46V202.26M809.04 195.46V202.26M810.71 195.46V202.26M812.38 195.46V202.26M814.05 195.46V202.26M815.72 195.46V202.26M817.39 195.46V202.26M819.06 195.46V202.26M820.73 195.46V202.26M822.40 195.46V202.26M824.07 195.46V202.26M825.74 195.46V202.26M827.41 195.46V202.26M829.08 195.46V202.26M830.75 195.46V202.26M832.42 195.46V202.26M834.09 195.46V202.26M835.76 195.46V202.26M837.43 195.46V202.26M839.10 195.46V202.26M840.77 195.46V202.26M842.44 195.46V202.26M844.11 195.46V202.26M845.78 195.46V202.26M847.45 195.46V202.26M849.12 195.46V202.26M850.79 195.46V202.26M852.46 195.46V202.26M854.13 195.46V202.26M855.80 195.46V202.26M857.47 195.46V202.26M859.14 195.46V202.26M860.81 195.46V202.26M862.48 195.46V202.26M864.15 195.46V202.26M865.82 195.46V202.26M867.49 195.46V202.26M869.16 195.46V202.26M870.83 195.46V202.26M872.50 195.46V202.26M874.17 195.46V202.26M875.84 195.46V202.26M877.51 195.46V202.26M879.18 195.46V202.26M880.85 195.46V202.26M882.52 195.46V202.26M884.19 195.46V202.26M885.86 195.46V202.26M887.53 195.46V202.26M889.20 195.46V202.26M890.87 195.46V202.26M892.54 195.46V202.26M894.21 195.46V202.26M895.88 195.46V202.26M897.55 195.46V202.26M899.22 195.46V202.26M900.89 195.46V202.26M902.56 195.46V202.26M904.23 195.46V202.26M905.90 195.46V202.26M907.57 195.46V202.26M909.24 195.46V202.26M910.91 195.46V202.26M912.58 195.46V202.26M914.25 195.46V202.26M915.92 195.46V202.26M917.59 195.46V202.26M919.26 195.46V202.26M920.93 195.46V202.26M922.60 195.46V202.26M924.27 195.46V202.26M925.94 195.46V202.26M927.61 195.46V202.26M929.28 195.46V202.26M930.95 195.46V202.26M932.62 195.46V202.26M934.29 195.46V202.26M935.96 195.46V202.26M937.63 195.46V202.26M939.30 195.46V202.26M940.97 195.46V202.26M942.64 195.46V202.26M944.31 195.46V202.26M945.98 195.46V202.26M947.65 195.46V202.26M949.32 195.46V202.26M950.99 195.46V202.26M952.66 195.46V202.26M954.33 195.46V202.26M956.00 195.46V202.26M957.67 195.46V202.26M959.34 195.46V202.26M961.01 195.46V202.26M962.68 195.46V202.26M964.35 195.46V202.26M966.02 195.46V202.26M967.69 195.46V202.26M969.36 195.46V202.26M971.03 195.46V202.26M972.70 195.46V202.26M974.37 195.46V202.26M976.04 195.46V202.26M977.71 195.46V202.26M979.38 195.46V202.26M981.05 195.46V202.26M982.72 195.46V202.26M984.39 195.46V202.26M986.06 195.46V202.26M987.73 195.46V202.26M989.40 195.46V202.26M991.07 195.46V202.26M992.74 195.46V202.26M994.41 195.46V202.26M996.08 195.46V202.26M997.75 195.46V202.26M999.42 195.46V202.26M1001.09 195.46V202.26M1002.76 195.46V202.26M1004.43 195.46V202.26M1006.10 195.46V202.26M1007.77 195.46V202.26M1009.44 195.46V202.26M1011.11 195.46V202.26M1012.78 195.46V202.26M1014.45 195.46V202.26M1016.12 195.46V202.26M1017.79 195.46V202.26M1019.46 195.46V202.26M1021.13 195.46V202.26M1022.80 195.46V202.26M1024.47 195.46V202.26M1026.14 195.46V202.26M1027.81 195.46V202.26M1029.48 195.46V202.26M1031.15 195.46V202.26M1032.82 195.46V202.26M1034.49 195.46V202.26M1036.16 195.46V202.26M1037.83 195.46V202.26M1039.50 195.46V202.26M1041.17 195.46V202.26M1042.84 195.46V202.26M1044.51 195.46V202.26M1046.18 195.46V202.26M1047.85 195.46V202.26M1049.52 195.46V202.26M1051.19 195.46V202.26M1052.86 195.46V202.26M1054.53 195.46V202.26M1056.20 195.46V202.26M1057.87 195.46V202.26M1059.54 195.46V202.26M1061.21 195.46V202.26M1062.88 195.46V202.26M1064.55 195.46V202.26M1066.22 195.46V202.26M1067.89 195.46V202.26M1069.56 195.46V202.26M1071.23 195.46V202.26M1072.90 195.46V202.26M1074.57 195.46V202.26M1076.24 195.46V202.26M1077.91 195.46V202.26M1079.58 195.46V202.26M1081.25 195.46V202.26" stroke="#2a6a30" stroke-width="0.55" fill="none"/>
<path d="M236.40 198.86h1.7M239.74 198.86h1.7M243.08 198.86h1.7M246.42 198.86h1.7M249.76 198.86h1.7M253.10 198.86h1.7M256.44 198.86h1.7M259.78 198.86h1.7M263.12 198.86h1.7M266.46 198.86h1.7M269.80 198.86h1.7M273.14 198.86h1.7M276.48 198.86h1.7M279.82 198.86h1.7M283.16 198.86h1.7M286.50 198.86h1.7M289.84 198.86h1.7M293.18 198.86h1.7M296.52 198.86h1.7M299.86 198.86h1.7M303.20 198.86h1.7M306.54 198.86h1.7M309.88 198.86h1.7M313.22 198.86h1.7M316.56 198.86h1.7M319.90 198.86h1.7M323.24 198.86h1.7M326.58 198.86h1.7M329.92 198.86h1.7M333.26 198.86h1.7M336.60 198.86h1.7M339.94 198.86h1.7M343.28 198.86h1.7M346.62 198.86h1.7M349.96 198.86h1.7M353.30 198.86h1.7M356.64 198.86h1.7M359.98 198.86h1.7M363.32 198.86h1.7M366.66 198.86h1.7M370.00 198.86h1.7M373.34 198.86h1.7M376.68 198.86h1.7M380.02 198.86h1.7M383.36 198.86h1.7M386.70 198.86h1.7M390.04 198.86h1.7M393.38 198.86h1.7M396.72 198.86h1.7M400.06 198.86h1.7M403.40 198.86h1.7M406.74 198.86h1.7M410.08 198.86h1.7M413.42 198.86h1.7M416.76 198.86h1.7M420.10 198.86h1.7M423.44 198.86h1.7M426.78 198.86h1.7M430.12 198.86h1.7M433.46 198.86h1.7M436.80 198.86h1.7M440.14 198.86h1.7M443.48 198.86h1.7M446.82 198.86h1.7M450.16 198.86h1.7M453.50 198.86h1.7M456.84 198.86h1.7M460.18 198.86h1.7M463.52 198.86h1.7M466.86 198.86h1.7M470.20 198.86h1.7M473.54 198.86h1.7M476.88 198.86h1.7M480.22 198.86h1.7M483.56 198.86h1.7M486.90 198.86h1.7M490.24 198.86h1.7M493.58 198.86h1.7M496.92 198.86h1.7M500.26 198.86h1.7M503.60 198.86h1.7M506.94 198.86h1.7M510.28 198.86h1.7M513.62 198.86h1.7M516.96 198.86h1.7M520.30 198.86h1.7M523.64 198.86h1.7M526.98 198.86h1.7M530.32 198.86h1.7M533.66 198.86h1.7M537.00 198.86h1.7M540.34 198.86h1.7M543.68 198.86h1.7M547.02 198.86h1.7M550.36 198.86h1.7M553.70 198.86h1.7M557.04 198.86h1.7M560.38 198.86h1.7M563.72 198.86h1.7M567.06 198.86h1.7M570.40 198.86h1.7M573.74 198.86h1.7M577.08 198.86h1.7M580.42 198.86h1.7M583.76 198.86h1.7M587.10 198.86h1.7M590.44 198.86h1.7M593.78 198.86h1.7M597.12 198.86h1.7M600.46 198.86h1.7M603.80 198.86h1.7M607.14 198.86h1.7M610.48 198.86h1.7M613.82 198.86h1.7M617.16 198.86h1.7M620.50 198.86h1.7M623.84 198.86h1.7M627.18 198.86h1.7M630.52 198.86h1.7M633.86 198.86h1.7M637.20 198.86h1.7M640.54 198.86h1.7M643.88 198.86h1.7M647.22 198.86h1.7M650.56 198.86h1.7M653.90 198.86h1.7M657.24 198.86h1.7M660.58 198.86h1.7M663.92 198.86h1.7M667.26 198.86h1.7M670.60 198.86h1.7M673.94 198.86h1.7M677.28 198.86h1.7M680.62 198.86h1.7M683.96 198.86h1.7M687.30 198.86h1.7M690.64 198.86h1.7M693.98 198.86h1.7M697.32 198.86h1.7M700.66 198.86h1.7M704.00 198.86h1.7M707.34 198.86h1.7M710.68 198.86h1.7M714.02 198.86h1.7M717.36 198.86h1.7M720.70 198.86h1.7M724.04 198.86h1.7M727.38 198.86h1.7M730.72 198.86h1.7M734.06 198.86h1.7M737.40 198.86h1.7M740.74 198.86h1.7M744.08 198.86h1.7M747.42 198.86h1.7M750.76 198.86h1.7M754.10 198.86h1.7M757.44 198.86h1.7M760.78 198.86h1.7M764.12 198.86h1.7M767.46 198.86h1.7M770.80 198.86h1.7M774.14 198.86h1.7M777.48 198.86h1.7M780.82 198.86h1.7M784.16 198.86h1.7M787.50 198.86h1.7M790.84 198.86h1.7M794.18 198.86h1.7M797.52 198.86h1.7M800.86 198.86h1.7M804.20 198.86h1.7M807.54 198.86h1.7M810.88 198.86h1.7M814.22 198.86h1.7M817.56 198.86h1.7M820.90 198.86h1.7M824.24 198.86h1.7M827.58 198.86h1.7M830.92 198.86h1.7M834.26 198.86h1.7M837.60 198.86h1.7M840.94 198.86h1.7M844.28 198.86h1.7M847.62 198.86h1.7M850.96 198.86h1.7M854.30 198.86h1.7M857.64 198.86h1.7M860.98 198.86h1.7M864.32 198.86h1.7M867.66 198.86h1.7M871.00 198.86h1.7M874.34 198.86h1.7M877.68 198.86h1.7M881.02 198.86h1.7M884.36 198.86h1.7M887.70 198.86h1.7M891.04 198.86h1.7M894.38 198.86h1.7M897.72 198.86h1.7M901.06 198.86h1.7M904.40 198.86h1.7M907.74 198.86h1.7M911.08 198.86h1.7M914.42 198.86h1.7M917.76 198.86h1.7M921.10 198.86h1.7M924.44 198.86h1.7M927.78 198.86h1.7M931.12 198.86h1.7M934.46 198.86h1.7M937.80 198.86h1.7M941.14 198.86h1.7M944.48 198.86h1.7M947.82 198.86h1.7M951.16 198.86h1.7M954.50 198.86h1.7M957.84 198.86h1.7M961.18 198.86h1.7M964.52 198.86h1.7M967.86 198.86h1.7M971.20 198.86h1.7M974.54 198.86h1.7M977.88 198.86h1.7M981.22 198.86h1.7M984.56 198.86h1.7M987.90 198.86h1.7M991.24 198.86h1.7M994.58 198.86h1.7M997.92 198.86h1.7M1001.26 198.86h1.7M1004.60 198.86h1.7M1007.94 198.86h1.7M1011.28 198.86h1.7M1014.62 198.86h1.7M1017.96 198.86h1.7M1021.30 198.86h1.7M1024.64 198.86h1.7M1027.98 198.86h1.7M1031.32 198.86h1.7M1034.66 198.86h1.7M1038.00 198.86h1.7M1041.34 198.86h1.7M1044.68 198.86h1.7M1048.02 198.86h1.7M1051.36 198.86h1.7M1054.70 198.86h1.7M1058.04 198.86h1.7M1061.38 198.86h1.7M1064.72 198.86h1.7M1068.06 198.86h1.7M1071.40 198.86h1.7M1074.74 198.86h1.7M1078.08 198.86h1.7" stroke="#163f1a" stroke-width="1.8" fill="none"/>
<rect x="238" y="315.18" width="842" height="7.70" fill="#b2ffb2"/>
<rect x="238" y="318.58" width="842" height="0.9" fill="#2f5f34"/>
<rect x="236" y="318.58" width="1.6" height="1" fill="#d02020"/>
<rect x="236" y="328.64" width="1.6" height="1" fill="#d02020"/>
<path d="M236.6 101.76H238.4V94.66H1080M236.6 111.82H238.4V104.72H1080M236.4 117.28V114.78H1080M236.4 127.34V124.84H1080M236.4 137.40V134.90H1080M236.5 146.96V144.96H238.30V152.06H242.90V144.96H275.68V152.06H280.28V144.96H313.06V152.06H317.66V144.96H350.44V152.06H355.04V144.96H387.82V152.06H392.42V144.96H425.20V152.06H429.80V144.96H462.58V152.06H467.18V144.96H499.96V152.06H504.56V144.96H537.34V152.06H541.94V144.96H574.72V152.06H579.32V144.96H612.10V152.06H616.70V144.96H649.48V152.06H654.08V144.96H686.86V152.06H691.46V144.96H724.24V152.06H728.84V144.96H761.62V152.06H766.22V144.96H799.00V152.06H803.60V144.96H836.38V152.06H840.98V144.96H873.76V152.06H878.36V144.96H911.14V152.06H915.74V144.96H948.52V152.06H953.12V144.96H985.90V152.06H990.50V144.96H1023.28V152.06H1027.88V144.96H1060.66V152.06H1065.26V144.96H1080M238.3 155.02V162.12H313.4V155.02H1080M237 178.14V175.14H1080M237 189.30V192.30H1080M236.4 222.48H238.5V215.38H1080M236.4 225.44H238.5V232.54H1080M236.5 250.16V252.66H1080M236.3 272.78H1080M236.3 282.84H1080M236.3 292.90H1080M236.3 302.96H1080M236.3 313.02H1080M236.8 380.44V383.44H1080M236.8 390.50V393.50H1080M236.8 410.62V413.62H1080M236.8 399.46V396.46H1080" stroke="#00b800" stroke-width="1.0" fill="none"/>
<rect x="236.1" y="94.96" width="1.2" height="4.6" fill="#00e400"/><rect x="236.1" y="105.02" width="1.2" height="4.6" fill="#00e400"/><rect x="236.3" y="144.96" width="1.3" height="4.4" fill="#00c800"/><rect x="236.3" y="155.02" width="1.3" height="4.4" fill="#00c800"/><rect x="236.1" y="215.38" width="1.2" height="6.6" fill="#00e000"/><rect x="236.1" y="225.84" width="1.2" height="6.8" fill="#00e000"/><rect x="236.1" y="266.58" width="1.1" height="6.2" fill="#00d400"/><rect x="238.3" y="266.58" width="0.8" height="6.2" fill="#00b000"/><rect x="236.1" y="276.64" width="1.1" height="6.2" fill="#00d400"/><rect x="238.3" y="276.64" width="0.8" height="6.2" fill="#00b000"/><rect x="236.1" y="287.10" width="1.0" height="5.8" fill="#00c800"/><rect x="236.1" y="297.16" width="1.0" height="5.8" fill="#00c800"/><rect x="236.1" y="307.22" width="1.0" height="5.8" fill="#00c800"/>
<path d="M236 165.08H1080M236 172.18H1080M236 205.32H1080M236 212.42H1080M236 255.62H1080M236 262.72H1080M236 336.10H1080M236 343.20H1080M236 346.16H1080M236 353.26H1080M236 356.22H1080M236 363.32H1080M236 366.28H1080M236 373.38H1080" stroke="#639068" stroke-width="1.15" fill="none"/>
<text x="237.3" y="170.98" font-size="6.4" fill="#f2f2f2" text-anchor="start" textLength="42.2" lengthAdjust="spacingAndGlyphs" >000000000000</text>
<text x="237.3" y="211.22" font-size="6.4" fill="#f2f2f2" text-anchor="start" textLength="28.2" lengthAdjust="spacingAndGlyphs" >11000000</text>
<text x="240.2" y="261.52" font-size="6.4" fill="#f2f2f2" text-anchor="start" textLength="7.0" lengthAdjust="spacingAndGlyphs" >10</text>
<text x="237.3" y="342.00" font-size="6.4" fill="#f2f2f2" text-anchor="start" textLength="21.1" lengthAdjust="spacingAndGlyphs" >011000</text>
<text x="237.3" y="352.06" font-size="6.4" fill="#f2f2f2" text-anchor="start" textLength="17.6" lengthAdjust="spacingAndGlyphs" >01010</text>
<text x="237.3" y="362.12" font-size="6.4" fill="#f2f2f2" text-anchor="start" textLength="21.1" lengthAdjust="spacingAndGlyphs" >001010</text>
<text x="237.3" y="372.18" font-size="6.4" fill="#f2f2f2" text-anchor="start" textLength="21.1" lengthAdjust="spacingAndGlyphs" >000101</text>
<path d="M237.6 255.62L239.2 262.72M237.6 262.72L239.2 255.62" stroke="#8fb092" stroke-width="0.8" fill="none"/>
<rect x="236" y="255.22" width="1.5" height="0.9" fill="#a03030"/><rect x="236" y="262.22" width="1.5" height="0.9" fill="#a03030"/><rect x="236.2" y="256.12" width="1.2" height="6" fill="#4a5a4a"/>
<path d="M238.30 329.74L239.30 326.04H274.68L275.68 329.74L274.68 333.14H239.30ZM275.68 329.74L276.68 326.04H312.06L313.06 329.74L312.06 333.14H276.68ZM313.06 329.74L314.06 326.04H349.44L350.44 329.74L349.44 333.14H314.06ZM350.44 329.74L351.44 326.04H386.82L387.82 329.74L386.82 333.14H351.44ZM387.82 329.74L388.82 326.04H424.20L425.20 329.74L424.20 333.14H388.82ZM425.20 329.74L426.20 326.04H461.58L462.58 329.74L461.58 333.14H426.20ZM462.58 329.74L463.58 326.04H498.96L499.96 329.74L498.96 333.14H463.58ZM499.96 329.74L500.96 326.04H536.34L537.34 329.74L536.34 333.14H500.96ZM537.34 329.74L538.34 326.04H573.72L574.72 329.74L573.72 333.14H538.34ZM574.72 329.74L575.72 326.04H611.10L612.10 329.74L611.10 333.14H575.72ZM612.10 329.74L613.10 326.04H648.48L649.48 329.74L648.48 333.14H613.10ZM649.48 329.74L650.48 326.04H685.86L686.86 329.74L685.86 333.14H650.48ZM686.86 329.74L687.86 326.04H723.24L724.24 329.74L723.24 333.14H687.86ZM724.24 329.74L725.24 326.04H760.62L761.62 329.74L760.62 333.14H725.24ZM761.62 329.74L762.62 326.04H798.00L799.00 329.74L798.00 333.14H762.62ZM799.00 329.74L800.00 326.04H835.38L836.38 329.74L835.38 333.14H800.00ZM836.38 329.74L837.38 326.04H872.76L873.76 329.74L872.76 333.14H837.38ZM873.76 329.74L874.76 326.04H910.14L911.14 329.74L910.14 333.14H874.76ZM911.14 329.74L912.14 326.04H947.52L948.52 329.74L947.52 333.14H912.14ZM948.52 329.74L949.52 326.04H984.90L985.90 329.74L984.90 333.14H949.52ZM985.90 329.74L986.90 326.04H1022.28L1023.28 329.74L1022.28 333.14H986.90ZM1023.28 329.74L1024.28 326.04H1059.66L1060.66 329.74L1059.66 333.14H1024.28ZM1081 326.04H1061.66L1060.66 329.74L1061.66 333.14H1081" stroke="#639068" stroke-width="1.15" fill="none"/>
<text x="239.90" y="331.94" font-size="6.4" fill="#f2f2f2" text-anchor="start" textLength="35.0" lengthAdjust="spacingAndGlyphs" >1111011111</text>
<text x="277.28" y="331.94" font-size="6.4" fill="#f2f2f2" text-anchor="start" textLength="30.2" lengthAdjust="spacingAndGlyphs" >1111100...</text>
<text x="314.66" y="331.94" font-size="6.4" fill="#f2f2f2" text-anchor="start" textLength="30.2" lengthAdjust="spacingAndGlyphs" >1111100...</text>
<text x="352.04" y="331.94" font-size="6.4" fill="#f2f2f2" text-anchor="start" textLength="30.2" lengthAdjust="spacingAndGlyphs" >1111100...</text>
<text x="389.42" y="331.94" font-size="6.4" fill="#f2f2f2" text-anchor="start" textLength="30.2" lengthAdjust="spacingAndGlyphs" >1111100...</text>
<text x="426.80" y="331.94" font-size="6.4" fill="#f2f2f2" text-anchor="start" textLength="30.2" lengthAdjust="spacingAndGlyphs" >1111100...</text>
<text x="464.18" y="331.94" font-size="6.4" fill="#f2f2f2" text-anchor="start" textLength="35.0" lengthAdjust="spacingAndGlyphs" >1111100101</text>
<text x="501.56" y="331.94" font-size="6.4" fill="#f2f2f2" text-anchor="start" textLength="30.2" lengthAdjust="spacingAndGlyphs" >1111100...</text>
<text x="538.94" y="331.94" font-size="6.4" fill="#f2f2f2" text-anchor="start" textLength="30.2" lengthAdjust="spacingAndGlyphs" >1111100...</text>
<text x="576.32" y="331.94" font-size="6.4" fill="#f2f2f2" text-anchor="start" textLength="30.2" lengthAdjust="spacingAndGlyphs" >1111101...</text>
<text x="613.70" y="331.94" font-size="6.4" fill="#f2f2f2" text-anchor="start" textLength="30.2" lengthAdjust="spacingAndGlyphs" >1111101...</text>
<text x="651.08" y="331.94" font-size="6.4" fill="#f2f2f2" text-anchor="start" textLength="30.2" lengthAdjust="spacingAndGlyphs" >1111101...</text>
<text x="688.46" y="331.94" font-size="6.4" fill="#f2f2f2" text-anchor="start" textLength="35.0" lengthAdjust="spacingAndGlyphs" >1111101011</text>
<text x="725.84" y="331.94" font-size="6.4" fill="#f2f2f2" text-anchor="start" textLength="30.2" lengthAdjust="spacingAndGlyphs" >1111101...</text>
<text x="763.22" y="331.94" font-size="6.4" fill="#f2f2f2" text-anchor="start" textLength="30.2" lengthAdjust="spacingAndGlyphs" >1111101...</text>
<text x="800.60" y="331.94" font-size="6.4" fill="#f2f2f2" text-anchor="start" textLength="30.2" lengthAdjust="spacingAndGlyphs" >1111101...</text>
<text x="837.98" y="331.94" font-size="6.4" fill="#f2f2f2" text-anchor="start" textLength="30.2" lengthAdjust="spacingAndGlyphs" >1111101...</text>
<text x="875.36" y="331.94" font-size="6.4" fill="#f2f2f2" text-anchor="start" textLength="30.2" lengthAdjust="spacingAndGlyphs" >1111110...</text>
<text x="912.74" y="331.94" font-size="6.4" fill="#f2f2f2" text-anchor="start" textLength="35.0" lengthAdjust="spacingAndGlyphs" >1111110001</text>
<text x="950.12" y="331.94" font-size="6.4" fill="#f2f2f2" text-anchor="start" textLength="30.2" lengthAdjust="spacingAndGlyphs" >1111110...</text>
<text x="987.50" y="331.94" font-size="6.4" fill="#f2f2f2" text-anchor="start" textLength="30.2" lengthAdjust="spacingAndGlyphs" >1111110...</text>
<text x="1024.88" y="331.94" font-size="6.4" fill="#f2f2f2" text-anchor="start" textLength="30.2" lengthAdjust="spacingAndGlyphs" >1111110...</text>
<text x="1062.26" y="331.94" font-size="6.4" fill="#f2f2f2" text-anchor="start" textLength="12.7" lengthAdjust="spacingAndGlyphs" >11...</text>
<rect x="236" y="520.1" width="844" height="1.4" fill="#d6d6d6"/>
<path d="M236.00 521.6V526.6M241.84 523.2V525.8M247.68 523.2V525.8M253.53 523.2V525.8M259.37 523.2V525.8M265.21 523.2V525.8M271.05 523.2V525.8M276.89 523.2V525.8M282.74 523.2V525.8M288.58 523.2V525.8M294.42 521.6V526.6M300.26 523.2V525.8M306.10 523.2V525.8M311.95 523.2V525.8M317.79 523.2V525.8M323.63 523.2V525.8M329.47 523.2V525.8M335.31 523.2V525.8M341.16 523.2V525.8M347.00 523.2V525.8M352.84 521.6V526.6M358.68 523.2V525.8M364.52 523.2V525.8M370.37 523.2V525.8M376.21 523.2V525.8M382.05 523.2V525.8M387.89 523.2V525.8M393.73 523.2V525.8M399.58 523.2V525.8M405.42 523.2V525.8M411.26 521.6V526.6M417.10 523.2V525.8M422.94 523.2V525.8M428.79 523.2V525.8M434.63 523.2V525.8M440.47 523.2V525.8M446.31 523.2V525.8M452.15 523.2V525.8M458.00 523.2V525.8M463.84 523.2V525.8M469.68 521.6V526.6M475.52 523.2V525.8M481.36 523.2V525.8M487.21 523.2V525.8M493.05 523.2V525.8M498.89 523.2V525.8M504.73 523.2V525.8M510.57 523.2V525.8M516.42 523.2V525.8M522.26 523.2V525.8M528.10 521.6V526.6M533.94 523.2V525.8M539.78 523.2V525.8M545.63 523.2V525.8M551.47 523.2V525.8M557.31 523.2V525.8M563.15 523.2V525.8M568.99 523.2V525.8M574.84 523.2V525.8M580.68 523.2V525.8M586.52 521.6V526.6M592.36 523.2V525.8M598.20 523.2V525.8M604.05 523.2V525.8M609.89 523.2V525.8M615.73 523.2V525.8M621.57 523.2V525.8M627.41 523.2V525.8M633.26 523.2V525.8M639.10 523.2V525.8M644.94 521.6V526.6M650.78 523.2V525.8M656.62 523.2V525.8M662.47 523.2V525.8M668.31 523.2V525.8M674.15 523.2V525.8M679.99 523.2V525.8M685.83 523.2V525.8M691.68 523.2V525.8M697.52 523.2V525.8M703.36 521.6V526.6M709.20 523.2V525.8M715.04 523.2V525.8M720.89 523.2V525.8M726.73 523.2V525.8M732.57 523.2V525.8M738.41 523.2V525.8M744.25 523.2V525.8M750.10 523.2V525.8M755.94 523.2V525.8M761.78 521.6V526.6M767.62 523.2V525.8M773.46 523.2V525.8M779.31 523.2V525.8M785.15 523.2V525.8M790.99 523.2V525.8M796.83 523.2V525.8M802.67 523.2V525.8M808.52 523.2V525.8M814.36 523.2V525.8M820.20 521.6V526.6M826.04 523.2V525.8M831.88 523.2V525.8M837.73 523.2V525.8M843.57 523.2V525.8M849.41 523.2V525.8M855.25 523.2V525.8M861.09 523.2V525.8M866.94 523.2V525.8M872.78 523.2V525.8M878.62 521.6V526.6M884.46 523.2V525.8M890.30 523.2V525.8M896.15 523.2V525.8M901.99 523.2V525.8M907.83 523.2V525.8M913.67 523.2V525.8M919.51 523.2V525.8M925.36 523.2V525.8M931.20 523.2V525.8M937.04 521.6V526.6M942.88 523.2V525.8M948.72 523.2V525.8M954.57 523.2V525.8M960.41 523.2V525.8M966.25 523.2V525.8M972.09 523.2V525.8M977.93 523.2V525.8M983.78 523.2V525.8M989.62 523.2V525.8M995.46 521.6V526.6M1001.30 523.2V525.8M1007.14 523.2V525.8M1012.99 523.2V525.8M1018.83 523.2V525.8M1024.67 523.2V525.8M1030.51 523.2V525.8M1036.35 523.2V525.8M1042.20 523.2V525.8M1048.04 523.2V525.8M1053.88 521.6V526.6M1059.72 523.2V525.8M1065.56 523.2V525.8M1071.41 523.2V525.8M1077.25 523.2V525.8M1083.09 523.2V525.8" stroke="#00c000" stroke-width="0.8" fill="none"/>
<text x="236.3" y="533.6" font-size="6.7" fill="#00bc00" text-anchor="start" textLength="6.3" lengthAdjust="spacingAndGlyphs" >ps</text>
<text x="353.14" y="533.6" font-size="6.7" fill="#00bc00" text-anchor="middle" textLength="40.2" lengthAdjust="spacingAndGlyphs" >100000000 ps</text>
<text x="469.98" y="533.6" font-size="6.7" fill="#00bc00" text-anchor="middle" textLength="40.2" lengthAdjust="spacingAndGlyphs" >200000000 ps</text>
<text x="586.82" y="533.6" font-size="6.7" fill="#00bc00" text-anchor="middle" textLength="40.2" lengthAdjust="spacingAndGlyphs" >300000000 ps</text>
<text x="703.66" y="533.6" font-size="6.7" fill="#00bc00" text-anchor="middle" textLength="40.2" lengthAdjust="spacingAndGlyphs" >400000000 ps</text>
<text x="820.50" y="533.6" font-size="6.7" fill="#00bc00" text-anchor="middle" textLength="40.2" lengthAdjust="spacingAndGlyphs" >500000000 ps</text>
<text x="937.34" y="533.6" font-size="6.7" fill="#00bc00" text-anchor="middle" textLength="40.2" lengthAdjust="spacingAndGlyphs" >600000000 ps</text>
<text x="1054.18" y="533.6" font-size="6.7" fill="#00bc00" text-anchor="middle" textLength="40.2" lengthAdjust="spacingAndGlyphs" >700000000 ps</text>
<rect x="236" y="534.4" width="844" height="0.9" fill="#3c3c3c"/>
</svg></div>
<div id="wscroll"><svg width="844" height="13" viewBox="236 545 844 13">
<rect x="236" y="545" width="844" height="1.2" fill="#d4d4d4"/>
<rect x="236" y="546.2" width="844" height="10.6" fill="#f1f1f1"/>
<rect x="237" y="546.6" width="10" height="9.4" fill="#fcfcfc" stroke="#c8c8c8" stroke-width="0.6"/>
<path d="M243 549.2 L240.6 551.3 L243 553.4Z" fill="#1a1a1a"/>
<defs><linearGradient id="trk" x1="0" y1="0" x2="0" y2="1"><stop offset="0" stop-color="#dcdcdc"/><stop offset="0.4" stop-color="#e9e9e9"/><stop offset="1" stop-color="#f2f2f2"/></linearGradient></defs><rect x="247.5" y="546.6" width="832.5" height="10" fill="url(#trk)"/>
<rect x="236" y="556.2" width="844" height="1.8" fill="#a6a6a6"/>
</svg></div>
<div id="status"><svg width="1078" height="14" viewBox="2 558 1078 14">
<rect x="2" y="558.6" width="1078" height="1" fill="#fbfbfb"/>
<text x="6" y="568.2" font-size="6.9" fill="#111" text-anchor="start" textLength="51" lengthAdjust="spacingAndGlyphs" >0 ps to 758919 ns</text>
<rect x="103" y="559.5" width="0.9" height="11" fill="#a8a8a8"/><rect x="104" y="559.5" width="0.8" height="11" fill="#fff"/>
</svg></div>
<div id="frameleft"></div>
</div></body></html>
